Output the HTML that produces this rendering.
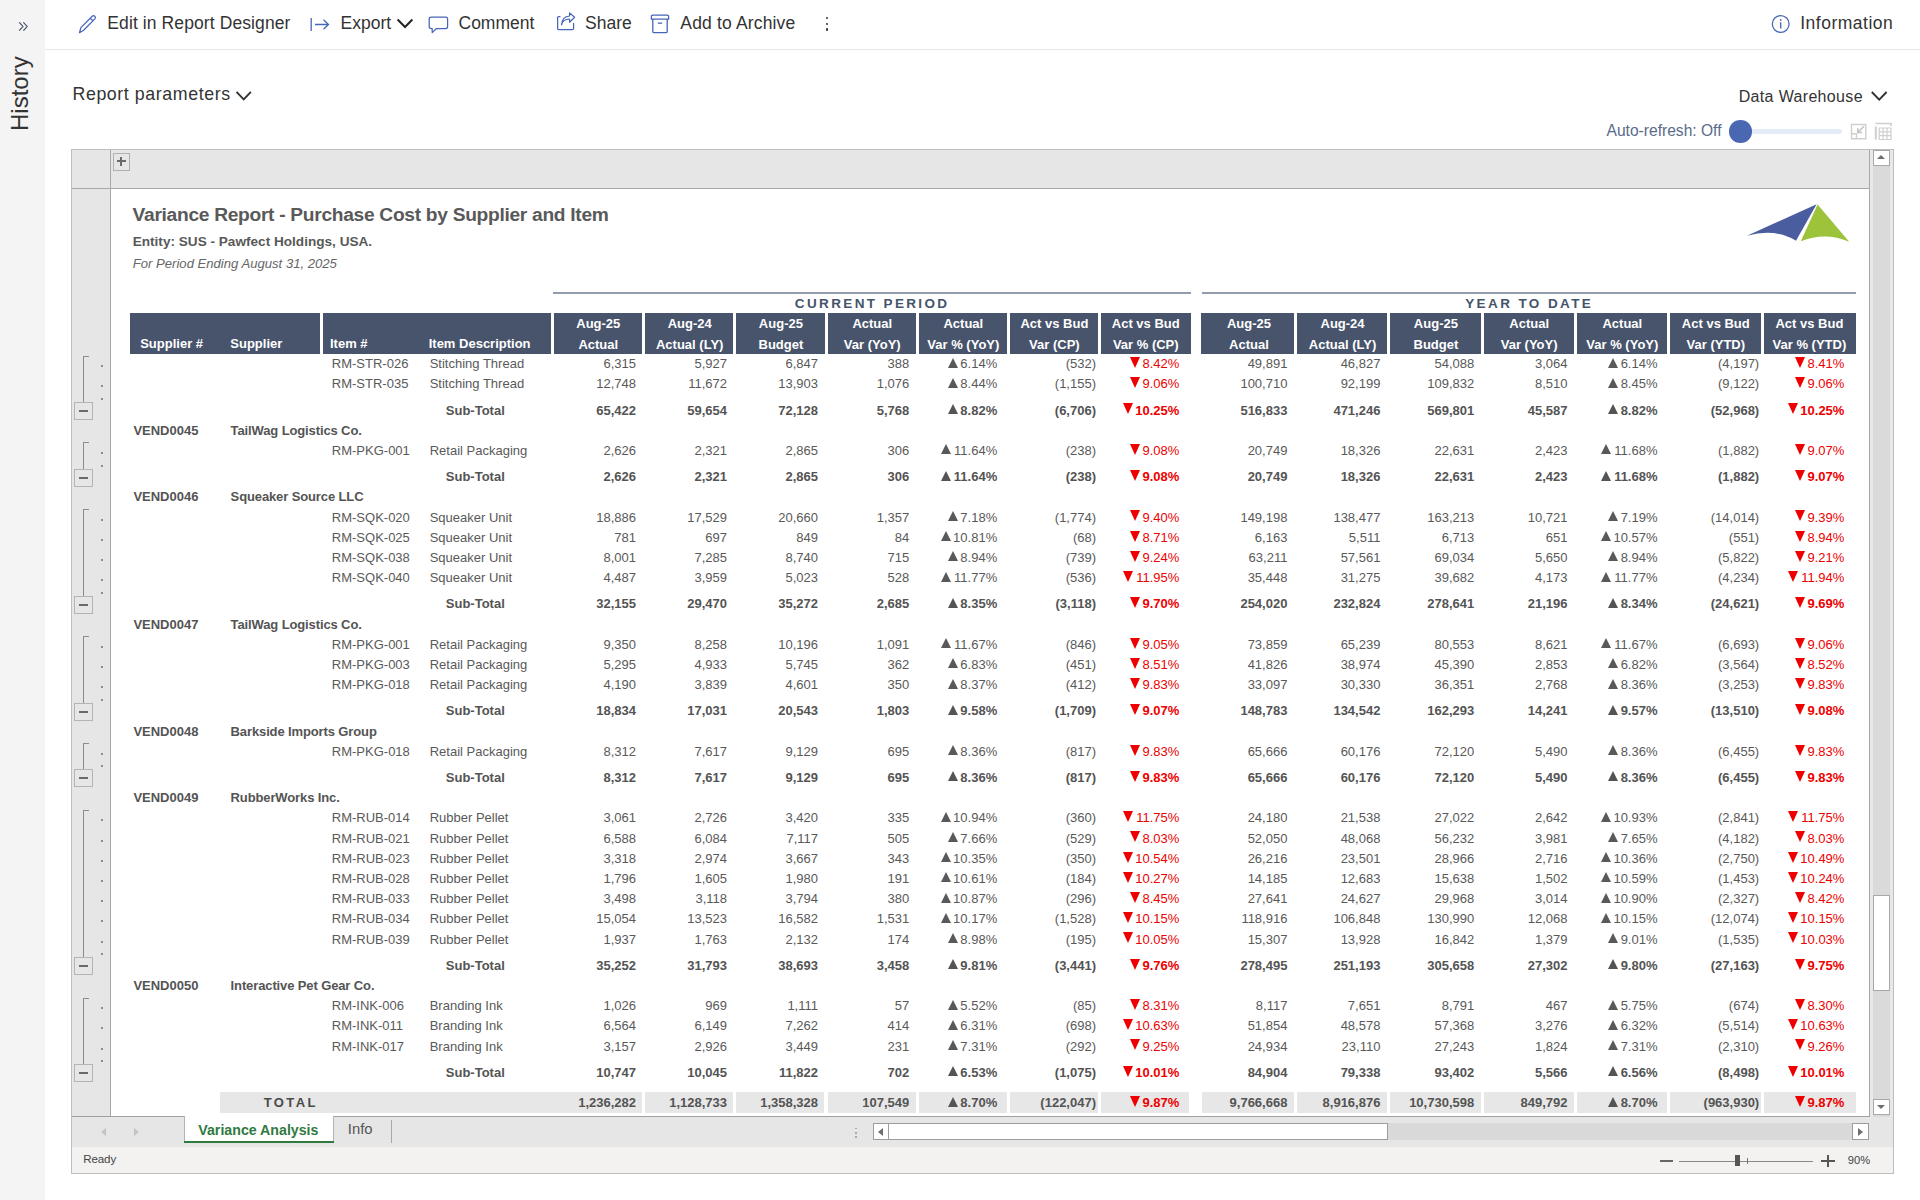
<!DOCTYPE html>
<html><head><meta charset="utf-8">
<style>
html,body{margin:0;padding:0;}
body{width:1920px;height:1200px;overflow:hidden;position:relative;background:#fff;font-family:"Liberation Sans",sans-serif;}
.t{position:absolute;white-space:nowrap;}
svg{position:absolute;overflow:visible;}
</style></head><body>
<!-- sidebar -->
<div style="position:absolute;left:0;top:0;width:45px;height:1200px;background:#f4f4f4"></div>
<svg style="left:18px;top:21px" width="11" height="11" viewBox="0 0 11 11"><path d="M1.2 1.3 L5 5.5 L1.2 9.7 M5.4 1.3 L9.2 5.5 L5.4 9.7" fill="none" stroke="#3d4a66" stroke-width="1.1"/></svg>
<div class="t" style="left:-16.7px;top:80.2px;width:74px;height:28px;font-size:24px;line-height:28px;color:#333;transform:rotate(-90deg);transform-origin:center center;text-align:center">History</div>
<!-- toolbar -->
<div style="position:absolute;left:45px;top:49px;width:1875px;height:1px;background:#e8e8e8"></div>
<svg style="left:78px;top:14px" width="20" height="20" viewBox="0 0 20 20"><path d="M1.5 18.7 L2.9 13.6 L14.2 2.3 Q15.4 1.1 16.8 2.2 Q18.1 3.6 16.9 4.9 L5.6 16.2 Z M12.4 4.2 L15 6.9" fill="none" stroke="#4766b8" stroke-width="1.25" stroke-linejoin="round"/></svg>
<div class="t" style="left:107.3px;top:13.2px;font-size:17.5px;line-height:20px;color:#333;letter-spacing:0.1px">Edit in Report Designer</div>
<svg style="left:309px;top:17px" width="22" height="15" viewBox="0 0 22 15"><path d="M2.2 1 L2.2 14 M6 7.5 L19.5 7.5 M14.5 2.8 L19.5 7.5 L14.5 12.2" fill="none" stroke="#4766b8" stroke-width="1.3"/></svg>
<div class="t" style="left:340.5px;top:13.2px;font-size:17.5px;line-height:20px;color:#333">Export</div>
<svg style="left:396px;top:18px" width="18" height="11" viewBox="0 0 18 11"><path d="M1.6 1.5 L9 9 L16.4 1.5" fill="none" stroke="#222" stroke-width="2"/></svg>
<svg style="left:428px;top:16px" width="21" height="18" viewBox="0 0 21 18"><path d="M3.3 1 L17.5 1 Q19.6 1 19.6 3.1 L19.6 10.6 Q19.6 12.7 17.5 12.7 L8.2 12.7 L4.2 16.6 L4.2 12.7 L3.3 12.7 Q1.2 12.7 1.2 10.6 L1.2 3.1 Q1.2 1 3.3 1 Z" fill="none" stroke="#4766b8" stroke-width="1.25" stroke-linejoin="round"/></svg>
<div class="t" style="left:458.5px;top:13.2px;font-size:17.5px;line-height:20px;color:#333">Comment</div>
<svg style="left:556px;top:12px" width="21" height="20" viewBox="0 0 21 20"><path d="M4.5 4.6 L2.6 4.6 Q1.6 4.6 1.6 5.6 L1.6 16.6 Q1.6 17.6 2.6 17.6 L16.6 17.6 Q17.6 17.6 17.6 16.6 L17.6 11" fill="none" stroke="#4766b8" stroke-width="1.25"/><path d="M5.6 12.8 Q6.6 7.2 13.6 7 L13.6 10.2 L18.6 5.3 L13.6 0.9 L13.6 4 Q6.1 4.5 5.6 12.8 Z" fill="none" stroke="#4766b8" stroke-width="1.2" stroke-linejoin="round"/></svg>
<div class="t" style="left:585px;top:13.2px;font-size:17.5px;line-height:20px;color:#333">Share</div>
<svg style="left:650px;top:14px" width="20" height="20" viewBox="0 0 20 20"><path d="M2.6 1.2 L17.4 1.2 Q18.6 1.2 18.6 2.4 L18.6 5.2 L1.4 5.2 L1.4 2.4 Q1.4 1.2 2.6 1.2 Z M2.8 5.2 L2.8 17.4 Q2.8 18.7 4.1 18.7 L15.9 18.7 Q17.2 18.7 17.2 17.4 L17.2 5.2 M7.8 9.2 L12.2 9.2" fill="none" stroke="#4766b8" stroke-width="1.3" stroke-linejoin="round"/></svg>
<div class="t" style="left:680.3px;top:13.2px;font-size:17.5px;line-height:20px;color:#333;letter-spacing:0.16px">Add to Archive</div>
<div style="position:absolute;left:825.8px;top:17px;width:2.4px;height:2.4px;border-radius:50%;background:#333"></div>
<div style="position:absolute;left:825.8px;top:22.6px;width:2.4px;height:2.4px;border-radius:50%;background:#333"></div>
<div style="position:absolute;left:825.8px;top:28.2px;width:2.4px;height:2.4px;border-radius:50%;background:#333"></div>
<svg style="left:1770px;top:14px" width="20" height="20" viewBox="0 0 20 20"><circle cx="10.7" cy="10" r="8.4" fill="none" stroke="#4766b8" stroke-width="1.25"/><path d="M10.7 8.2 L10.7 14.4" stroke="#4766b8" stroke-width="1.3"/><circle cx="10.7" cy="5.9" r="0.9" fill="#4766b8"/></svg>
<div class="t" style="left:1800.2px;top:13.2px;font-size:17.5px;line-height:20px;color:#333;letter-spacing:0.5px">Information</div>
<!-- params -->
<div class="t" style="left:72.5px;top:83.3px;font-size:17.8px;line-height:22px;color:#333;letter-spacing:0.58px">Report parameters</div>
<svg style="left:235px;top:90px" width="18" height="12" viewBox="0 0 18 12"><path d="M1.5 1.8 L8.7 9.4 L15.9 1.8" fill="none" stroke="#333" stroke-width="1.9"/></svg>
<div class="t" style="left:1738.7px;top:87px;font-size:16px;line-height:20px;color:#333;letter-spacing:0.34px">Data Warehouse</div>
<svg style="left:1870px;top:90px" width="18" height="12" viewBox="0 0 18 12"><path d="M1.8 2 L9.2 9.6 L16.6 2" fill="none" stroke="#333" stroke-width="1.9"/></svg>
<div class="t" style="left:1606.5px;top:121.2px;font-size:15.6px;line-height:20px;color:#5b6b8a">Auto-refresh: Off</div>
<div style="position:absolute;left:1745px;top:129px;width:97px;height:5px;border-radius:3px;background:#e3ebf6"></div>
<div style="position:absolute;left:1729.2px;top:120.2px;width:22.6px;height:22.6px;border-radius:50%;background:#4a67b2"></div>
<svg style="left:1850px;top:123px" width="18" height="18" viewBox="0 0 18 18"><path d="M1.5 1.5 L15.8 1.5 L15.8 15.8 L1.5 15.8 Z" fill="none" stroke="#d0d0d0" stroke-width="1.4"/><path d="M1.5 10.8 L6.5 10.8 L6.5 15.8" fill="none" stroke="#d0d0d0" stroke-width="1.4"/><path d="M14 3.3 L7.8 9.5 M7.8 5.2 L7.8 9.5 L12.1 9.5" fill="none" stroke="#c4c4c4" stroke-width="1.6"/></svg>
<svg style="left:1874px;top:122px" width="19" height="19" viewBox="0 0 19 19"><path d="M1.5 1.5 L17 1.5 L17 4" fill="none" stroke="#cfcfcf" stroke-width="1.6"/><path d="M1.8 4.5 L1.8 17.5" stroke="#cfcfcf" stroke-width="2"/><path d="M5.2 6 L17 6 L17 17.5 L5.2 17.5 Z M5.2 9.8 L17 9.8 M5.2 13.7 L17 13.7 M9.1 6 L9.1 17.5 M13 6 L13 17.5" fill="none" stroke="#cfcfcf" stroke-width="1.2"/></svg>
<!-- spreadsheet frame -->
<div style="position:absolute;left:71px;top:149px;width:1821px;height:1023px;border:1px solid #bdbdbd;background:#fff"></div>
<div style="position:absolute;left:72px;top:150px;width:1797px;height:38px;background:#e6e6e6"></div>
<div style="position:absolute;left:72px;top:188px;width:1797px;height:1px;background:#a8a8a8"></div>
<div style="position:absolute;left:72px;top:189px;width:38px;height:927px;background:#e6e6e6"></div>
<div style="position:absolute;left:110px;top:150px;width:1px;height:966px;background:#a8a8a8"></div>
<div style="position:absolute;left:1869px;top:150px;width:1px;height:967px;background:#a8a8a8"></div>
<div style="position:absolute;left:72px;top:1116px;width:1798px;height:1px;background:#a0a0a0"></div>
<!-- + box -->
<div style="position:absolute;left:112.5px;top:152.5px;width:15px;height:16px;border:1px solid #b0b0b0;background:#e6e6e6"></div>
<div style="position:absolute;left:116.5px;top:160.3px;width:9px;height:2px;background:#6a6a6a"></div>
<div style="position:absolute;left:120px;top:156.8px;width:2px;height:9px;background:#6a6a6a"></div>
<!-- vertical scrollbar -->
<div style="position:absolute;left:1870px;top:150px;width:23px;height:967px;background:#e8e8e8"></div>
<div style="position:absolute;left:1873.3px;top:150px;width:16.5px;height:967px;background:#dadada"></div>
<div style="position:absolute;left:1873.3px;top:150.3px;width:14.5px;height:14.2px;border:1px solid #a8a8a8;background:#fff"></div>
<div style="position:absolute;left:1877.2px;top:155.2px;width:0;height:0;border-left:4.2px solid transparent;border-right:4.2px solid transparent;border-bottom:4.5px solid #6e6e6e"></div>
<div style="position:absolute;left:1873.3px;top:1099px;width:14.5px;height:14.4px;border:1px solid #a8a8a8;background:#fff"></div>
<div style="position:absolute;left:1877.2px;top:1104.8px;width:0;height:0;border-left:4.2px solid transparent;border-right:4.2px solid transparent;border-top:4.5px solid #6e6e6e"></div>
<div style="position:absolute;left:1873.3px;top:895.2px;width:14.6px;height:94.3px;border:1px solid #a8a8a8;background:#fff"></div>
<!-- title block -->
<div class="t" style="left:132.6px;top:203.8px;font-size:19.2px;line-height:22px;font-weight:bold;color:#595959;letter-spacing:-0.3px">Variance Report - Purchase Cost by Supplier and Item</div>
<div class="t" style="left:132.7px;top:233.6px;font-size:13.6px;line-height:16px;font-weight:bold;color:#595959">Entity: SUS - Pawfect Holdings, USA.</div>
<div class="t" style="left:132.8px;top:255.5px;font-size:13.1px;line-height:15px;font-style:italic;color:#666">For Period Ending August 31, 2025</div>
<!-- logo -->
<svg style="left:1740px;top:200px" width="120" height="50" viewBox="1740 200 120 50"><path d="M1747 235.8 L1816.6 204.2 L1796 240.8 Q1775 228 1747 235.8 Z" fill="#4a5d9e"/><path d="M1817.6 204.6 L1849.2 241.7 Q1825 231.5 1800.8 241.3 Z" fill="#9dc33b"/></svg>
<!-- header rules and labels -->
<div style="position:absolute;left:553px;top:292px;width:638px;height:2px;background:#939cad"></div>
<div style="position:absolute;left:1202.3px;top:292px;width:653.5px;height:2px;background:#939cad"></div>
<div class="t" style="left:794.8px;top:296.3px;font-size:13.5px;line-height:15px;font-weight:bold;color:#44546a;letter-spacing:2.37px">CURRENT PERIOD</div>
<div class="t" style="left:1465.2px;top:296.3px;font-size:13.5px;line-height:15px;font-weight:bold;color:#44546a;letter-spacing:2.4px">YEAR TO DATE</div>
<!-- header band -->
<div style="position:absolute;left:130px;top:312.8px;width:1061px;height:41.2px;background:#48546c"></div>
<div style="position:absolute;left:1201.3px;top:312.8px;width:654.5px;height:41.2px;background:#48546c"></div>
<div style="position:absolute;left:320.1px;top:312.8px;width:3px;height:41.2px;background:#fff"></div>
<div style="position:absolute;left:550.5px;top:312.8px;width:3px;height:41.2px;background:#fff"></div>
<div style="position:absolute;left:642.1px;top:312.8px;width:3px;height:41.2px;background:#fff"></div>
<div style="position:absolute;left:733.3px;top:312.8px;width:3px;height:41.2px;background:#fff"></div>
<div style="position:absolute;left:824.5px;top:312.8px;width:3px;height:41.2px;background:#fff"></div>
<div style="position:absolute;left:916.0px;top:312.8px;width:3px;height:41.2px;background:#fff"></div>
<div style="position:absolute;left:1006.7px;top:312.8px;width:3px;height:41.2px;background:#fff"></div>
<div style="position:absolute;left:1098.1px;top:312.8px;width:3px;height:41.2px;background:#fff"></div>
<div style="position:absolute;left:1293.9px;top:312.8px;width:3px;height:41.2px;background:#fff"></div>
<div style="position:absolute;left:1387.2px;top:312.8px;width:3px;height:41.2px;background:#fff"></div>
<div style="position:absolute;left:1480.6px;top:312.8px;width:3px;height:41.2px;background:#fff"></div>
<div style="position:absolute;left:1573.7px;top:312.8px;width:3px;height:41.2px;background:#fff"></div>
<div style="position:absolute;left:1667.0px;top:312.8px;width:3px;height:41.2px;background:#fff"></div>
<div style="position:absolute;left:1760.6px;top:312.8px;width:3px;height:41.2px;background:#fff"></div>

<div class="t" style="left:140.20px;top:336.80px;font-size:13px;line-height:13px;font-weight:bold;color:#fff;">Supplier #</div>
<div class="t" style="left:230.30px;top:336.80px;font-size:13px;line-height:13px;font-weight:bold;color:#fff;">Supplier</div>
<div class="t" style="left:330.00px;top:336.80px;font-size:13px;line-height:13px;font-weight:bold;color:#fff;">Item #</div>
<div class="t" style="left:428.70px;top:336.80px;font-size:13px;line-height:13px;font-weight:bold;color:#fff;">Item Description</div>
<div class="t" style="left:298.30px;width:600px;text-align:center;top:317.40px;font-size:13px;line-height:13px;font-weight:bold;color:#fff;">Aug-25</div>
<div class="t" style="left:298.30px;width:600px;text-align:center;top:337.50px;font-size:13px;line-height:13px;font-weight:bold;color:#fff;">Actual</div>
<div class="t" style="left:389.70px;width:600px;text-align:center;top:317.40px;font-size:13px;line-height:13px;font-weight:bold;color:#fff;">Aug-24</div>
<div class="t" style="left:389.70px;width:600px;text-align:center;top:337.50px;font-size:13px;line-height:13px;font-weight:bold;color:#fff;">Actual (LY)</div>
<div class="t" style="left:480.90px;width:600px;text-align:center;top:317.40px;font-size:13px;line-height:13px;font-weight:bold;color:#fff;">Aug-25</div>
<div class="t" style="left:480.90px;width:600px;text-align:center;top:337.50px;font-size:13px;line-height:13px;font-weight:bold;color:#fff;">Budget</div>
<div class="t" style="left:572.25px;width:600px;text-align:center;top:317.40px;font-size:13px;line-height:13px;font-weight:bold;color:#fff;">Actual</div>
<div class="t" style="left:572.25px;width:600px;text-align:center;top:337.50px;font-size:13px;line-height:13px;font-weight:bold;color:#fff;">Var (YoY)</div>
<div class="t" style="left:663.35px;width:600px;text-align:center;top:317.40px;font-size:13px;line-height:13px;font-weight:bold;color:#fff;">Actual</div>
<div class="t" style="left:663.35px;width:600px;text-align:center;top:337.50px;font-size:13px;line-height:13px;font-weight:bold;color:#fff;">Var % (YoY)</div>
<div class="t" style="left:754.40px;width:600px;text-align:center;top:317.40px;font-size:13px;line-height:13px;font-weight:bold;color:#fff;">Act vs Bud</div>
<div class="t" style="left:754.40px;width:600px;text-align:center;top:337.50px;font-size:13px;line-height:13px;font-weight:bold;color:#fff;">Var (CP)</div>
<div class="t" style="left:845.75px;width:600px;text-align:center;top:317.40px;font-size:13px;line-height:13px;font-weight:bold;color:#fff;">Act vs Bud</div>
<div class="t" style="left:845.75px;width:600px;text-align:center;top:337.50px;font-size:13px;line-height:13px;font-weight:bold;color:#fff;">Var % (CP)</div>
<div class="t" style="left:948.95px;width:600px;text-align:center;top:317.40px;font-size:13px;line-height:13px;font-weight:bold;color:#fff;">Aug-25</div>
<div class="t" style="left:948.95px;width:600px;text-align:center;top:337.50px;font-size:13px;line-height:13px;font-weight:bold;color:#fff;">Actual</div>
<div class="t" style="left:1042.55px;width:600px;text-align:center;top:317.40px;font-size:13px;line-height:13px;font-weight:bold;color:#fff;">Aug-24</div>
<div class="t" style="left:1042.55px;width:600px;text-align:center;top:337.50px;font-size:13px;line-height:13px;font-weight:bold;color:#fff;">Actual (LY)</div>
<div class="t" style="left:1135.90px;width:600px;text-align:center;top:317.40px;font-size:13px;line-height:13px;font-weight:bold;color:#fff;">Aug-25</div>
<div class="t" style="left:1135.90px;width:600px;text-align:center;top:337.50px;font-size:13px;line-height:13px;font-weight:bold;color:#fff;">Budget</div>
<div class="t" style="left:1229.15px;width:600px;text-align:center;top:317.40px;font-size:13px;line-height:13px;font-weight:bold;color:#fff;">Actual</div>
<div class="t" style="left:1229.15px;width:600px;text-align:center;top:337.50px;font-size:13px;line-height:13px;font-weight:bold;color:#fff;">Var (YoY)</div>
<div class="t" style="left:1322.35px;width:600px;text-align:center;top:317.40px;font-size:13px;line-height:13px;font-weight:bold;color:#fff;">Actual</div>
<div class="t" style="left:1322.35px;width:600px;text-align:center;top:337.50px;font-size:13px;line-height:13px;font-weight:bold;color:#fff;">Var % (YoY)</div>
<div class="t" style="left:1415.80px;width:600px;text-align:center;top:317.40px;font-size:13px;line-height:13px;font-weight:bold;color:#fff;">Act vs Bud</div>
<div class="t" style="left:1415.80px;width:600px;text-align:center;top:337.50px;font-size:13px;line-height:13px;font-weight:bold;color:#fff;">Var (YTD)</div>
<div class="t" style="left:1509.45px;width:600px;text-align:center;top:317.40px;font-size:13px;line-height:13px;font-weight:bold;color:#fff;">Act vs Bud</div>
<div class="t" style="left:1509.45px;width:600px;text-align:center;top:337.50px;font-size:13px;line-height:13px;font-weight:bold;color:#fff;">Var % (YTD)</div>
<div class="t" style="left:331.80px;top:357.20px;font-size:13px;line-height:13px;color:#595959;">RM-STR-026</div>
<div class="t" style="left:429.70px;top:357.20px;font-size:13px;line-height:13px;color:#595959;">Stitching Thread</div>
<div class="t" style="right:1284.00px;top:357.20px;font-size:13px;line-height:13px;color:#595959;">6,315</div>
<div class="t" style="right:1193.00px;top:357.20px;font-size:13px;line-height:13px;color:#595959;">5,927</div>
<div class="t" style="right:1102.00px;top:357.20px;font-size:13px;line-height:13px;color:#595959;">6,847</div>
<div class="t" style="right:1010.70px;top:357.20px;font-size:13px;line-height:13px;color:#595959;">388</div>
<div class="t" style="right:922.80px;top:357.20px;font-size:13px;line-height:13px;color:#595959;">6.14%</div>
<div style="position:absolute;left:948.04px;top:357.60px;width:0;height:0;border-left:5.40px solid transparent;border-right:5.40px solid transparent;border-bottom:10.60px solid #595959"></div>
<div class="t" style="right:824.00px;top:357.20px;font-size:13px;line-height:13px;color:#595959;">(532)</div>
<div class="t" style="right:740.70px;top:357.20px;font-size:13px;line-height:13px;color:#ee0000;">8.42%</div>
<div style="position:absolute;left:1129.94px;top:356.90px;width:0;height:0;border-left:5.50px solid transparent;border-right:5.50px solid transparent;border-top:11.00px solid #ee0000"></div>
<div class="t" style="right:632.60px;top:357.20px;font-size:13px;line-height:13px;color:#595959;">49,891</div>
<div class="t" style="right:539.60px;top:357.20px;font-size:13px;line-height:13px;color:#595959;">46,827</div>
<div class="t" style="right:445.80px;top:357.20px;font-size:13px;line-height:13px;color:#595959;">54,088</div>
<div class="t" style="right:352.50px;top:357.20px;font-size:13px;line-height:13px;color:#595959;">3,064</div>
<div class="t" style="right:262.50px;top:357.20px;font-size:13px;line-height:13px;color:#595959;">6.14%</div>
<div style="position:absolute;left:1608.34px;top:357.60px;width:0;height:0;border-left:5.40px solid transparent;border-right:5.40px solid transparent;border-bottom:10.60px solid #595959"></div>
<div class="t" style="right:160.80px;top:357.20px;font-size:13px;line-height:13px;color:#595959;">(4,197)</div>
<div class="t" style="right:75.60px;top:357.20px;font-size:13px;line-height:13px;color:#ee0000;">8.41%</div>
<div style="position:absolute;left:1795.04px;top:356.90px;width:0;height:0;border-left:5.50px solid transparent;border-right:5.50px solid transparent;border-top:11.00px solid #ee0000"></div>
<div class="t" style="left:331.80px;top:377.40px;font-size:13px;line-height:13px;color:#595959;">RM-STR-035</div>
<div class="t" style="left:429.70px;top:377.40px;font-size:13px;line-height:13px;color:#595959;">Stitching Thread</div>
<div class="t" style="right:1284.00px;top:377.40px;font-size:13px;line-height:13px;color:#595959;">12,748</div>
<div class="t" style="right:1193.00px;top:377.40px;font-size:13px;line-height:13px;color:#595959;">11,672</div>
<div class="t" style="right:1102.00px;top:377.40px;font-size:13px;line-height:13px;color:#595959;">13,903</div>
<div class="t" style="right:1010.70px;top:377.40px;font-size:13px;line-height:13px;color:#595959;">1,076</div>
<div class="t" style="right:922.80px;top:377.40px;font-size:13px;line-height:13px;color:#595959;">8.44%</div>
<div style="position:absolute;left:948.04px;top:377.80px;width:0;height:0;border-left:5.40px solid transparent;border-right:5.40px solid transparent;border-bottom:10.60px solid #595959"></div>
<div class="t" style="right:824.00px;top:377.40px;font-size:13px;line-height:13px;color:#595959;">(1,155)</div>
<div class="t" style="right:740.70px;top:377.40px;font-size:13px;line-height:13px;color:#ee0000;">9.06%</div>
<div style="position:absolute;left:1129.94px;top:377.10px;width:0;height:0;border-left:5.50px solid transparent;border-right:5.50px solid transparent;border-top:11.00px solid #ee0000"></div>
<div class="t" style="right:632.60px;top:377.40px;font-size:13px;line-height:13px;color:#595959;">100,710</div>
<div class="t" style="right:539.60px;top:377.40px;font-size:13px;line-height:13px;color:#595959;">92,199</div>
<div class="t" style="right:445.80px;top:377.40px;font-size:13px;line-height:13px;color:#595959;">109,832</div>
<div class="t" style="right:352.50px;top:377.40px;font-size:13px;line-height:13px;color:#595959;">8,510</div>
<div class="t" style="right:262.50px;top:377.40px;font-size:13px;line-height:13px;color:#595959;">8.45%</div>
<div style="position:absolute;left:1608.34px;top:377.80px;width:0;height:0;border-left:5.40px solid transparent;border-right:5.40px solid transparent;border-bottom:10.60px solid #595959"></div>
<div class="t" style="right:160.80px;top:377.40px;font-size:13px;line-height:13px;color:#595959;">(9,122)</div>
<div class="t" style="right:75.60px;top:377.40px;font-size:13px;line-height:13px;color:#ee0000;">9.06%</div>
<div style="position:absolute;left:1795.04px;top:377.10px;width:0;height:0;border-left:5.50px solid transparent;border-right:5.50px solid transparent;border-top:11.00px solid #ee0000"></div>
<div class="t" style="left:445.80px;top:403.60px;font-size:13px;line-height:13px;font-weight:bold;color:#545454;">Sub-Total</div>
<div class="t" style="right:1284.00px;top:403.60px;font-size:13px;line-height:13px;font-weight:bold;color:#545454;">65,422</div>
<div class="t" style="right:1193.00px;top:403.60px;font-size:13px;line-height:13px;font-weight:bold;color:#545454;">59,654</div>
<div class="t" style="right:1102.00px;top:403.60px;font-size:13px;line-height:13px;font-weight:bold;color:#545454;">72,128</div>
<div class="t" style="right:1010.70px;top:403.60px;font-size:13px;line-height:13px;font-weight:bold;color:#545454;">5,768</div>
<div class="t" style="right:922.80px;top:403.60px;font-size:13px;line-height:13px;font-weight:bold;color:#545454;">8.82%</div>
<div style="position:absolute;left:948.04px;top:404.00px;width:0;height:0;border-left:5.40px solid transparent;border-right:5.40px solid transparent;border-bottom:10.60px solid #545454"></div>
<div class="t" style="right:824.00px;top:403.60px;font-size:13px;line-height:13px;font-weight:bold;color:#545454;">(6,706)</div>
<div class="t" style="right:740.70px;top:403.60px;font-size:13px;line-height:13px;font-weight:bold;color:#ee0000;">10.25%</div>
<div style="position:absolute;left:1122.71px;top:403.30px;width:0;height:0;border-left:5.50px solid transparent;border-right:5.50px solid transparent;border-top:11.00px solid #ee0000"></div>
<div class="t" style="right:632.60px;top:403.60px;font-size:13px;line-height:13px;font-weight:bold;color:#545454;">516,833</div>
<div class="t" style="right:539.60px;top:403.60px;font-size:13px;line-height:13px;font-weight:bold;color:#545454;">471,246</div>
<div class="t" style="right:445.80px;top:403.60px;font-size:13px;line-height:13px;font-weight:bold;color:#545454;">569,801</div>
<div class="t" style="right:352.50px;top:403.60px;font-size:13px;line-height:13px;font-weight:bold;color:#545454;">45,587</div>
<div class="t" style="right:262.50px;top:403.60px;font-size:13px;line-height:13px;font-weight:bold;color:#545454;">8.82%</div>
<div style="position:absolute;left:1608.34px;top:404.00px;width:0;height:0;border-left:5.40px solid transparent;border-right:5.40px solid transparent;border-bottom:10.60px solid #545454"></div>
<div class="t" style="right:160.80px;top:403.60px;font-size:13px;line-height:13px;font-weight:bold;color:#545454;">(52,968)</div>
<div class="t" style="right:75.60px;top:403.60px;font-size:13px;line-height:13px;font-weight:bold;color:#ee0000;">10.25%</div>
<div style="position:absolute;left:1787.81px;top:403.30px;width:0;height:0;border-left:5.50px solid transparent;border-right:5.50px solid transparent;border-top:11.00px solid #ee0000"></div>
<div class="t" style="left:133.40px;top:423.80px;font-size:13px;line-height:13px;font-weight:bold;color:#545454;">VEND0045</div>
<div class="t" style="left:230.60px;top:423.80px;font-size:13px;line-height:13px;font-weight:bold;color:#545454;letter-spacing:-0.12px;">TailWag Logistics Co.</div>
<div class="t" style="left:331.80px;top:444.00px;font-size:13px;line-height:13px;color:#595959;">RM-PKG-001</div>
<div class="t" style="left:429.70px;top:444.00px;font-size:13px;line-height:13px;color:#595959;">Retail Packaging</div>
<div class="t" style="right:1284.00px;top:444.00px;font-size:13px;line-height:13px;color:#595959;">2,626</div>
<div class="t" style="right:1193.00px;top:444.00px;font-size:13px;line-height:13px;color:#595959;">2,321</div>
<div class="t" style="right:1102.00px;top:444.00px;font-size:13px;line-height:13px;color:#595959;">2,865</div>
<div class="t" style="right:1010.70px;top:444.00px;font-size:13px;line-height:13px;color:#595959;">306</div>
<div class="t" style="right:922.80px;top:444.00px;font-size:13px;line-height:13px;color:#595959;">11.64%</div>
<div style="position:absolute;left:940.81px;top:444.40px;width:0;height:0;border-left:5.40px solid transparent;border-right:5.40px solid transparent;border-bottom:10.60px solid #595959"></div>
<div class="t" style="right:824.00px;top:444.00px;font-size:13px;line-height:13px;color:#595959;">(238)</div>
<div class="t" style="right:740.70px;top:444.00px;font-size:13px;line-height:13px;color:#ee0000;">9.08%</div>
<div style="position:absolute;left:1129.94px;top:443.70px;width:0;height:0;border-left:5.50px solid transparent;border-right:5.50px solid transparent;border-top:11.00px solid #ee0000"></div>
<div class="t" style="right:632.60px;top:444.00px;font-size:13px;line-height:13px;color:#595959;">20,749</div>
<div class="t" style="right:539.60px;top:444.00px;font-size:13px;line-height:13px;color:#595959;">18,326</div>
<div class="t" style="right:445.80px;top:444.00px;font-size:13px;line-height:13px;color:#595959;">22,631</div>
<div class="t" style="right:352.50px;top:444.00px;font-size:13px;line-height:13px;color:#595959;">2,423</div>
<div class="t" style="right:262.50px;top:444.00px;font-size:13px;line-height:13px;color:#595959;">11.68%</div>
<div style="position:absolute;left:1601.11px;top:444.40px;width:0;height:0;border-left:5.40px solid transparent;border-right:5.40px solid transparent;border-bottom:10.60px solid #595959"></div>
<div class="t" style="right:160.80px;top:444.00px;font-size:13px;line-height:13px;color:#595959;">(1,882)</div>
<div class="t" style="right:75.60px;top:444.00px;font-size:13px;line-height:13px;color:#ee0000;">9.07%</div>
<div style="position:absolute;left:1795.04px;top:443.70px;width:0;height:0;border-left:5.50px solid transparent;border-right:5.50px solid transparent;border-top:11.00px solid #ee0000"></div>
<div class="t" style="left:445.80px;top:470.20px;font-size:13px;line-height:13px;font-weight:bold;color:#545454;">Sub-Total</div>
<div class="t" style="right:1284.00px;top:470.20px;font-size:13px;line-height:13px;font-weight:bold;color:#545454;">2,626</div>
<div class="t" style="right:1193.00px;top:470.20px;font-size:13px;line-height:13px;font-weight:bold;color:#545454;">2,321</div>
<div class="t" style="right:1102.00px;top:470.20px;font-size:13px;line-height:13px;font-weight:bold;color:#545454;">2,865</div>
<div class="t" style="right:1010.70px;top:470.20px;font-size:13px;line-height:13px;font-weight:bold;color:#545454;">306</div>
<div class="t" style="right:922.80px;top:470.20px;font-size:13px;line-height:13px;font-weight:bold;color:#545454;">11.64%</div>
<div style="position:absolute;left:940.81px;top:470.60px;width:0;height:0;border-left:5.40px solid transparent;border-right:5.40px solid transparent;border-bottom:10.60px solid #545454"></div>
<div class="t" style="right:824.00px;top:470.20px;font-size:13px;line-height:13px;font-weight:bold;color:#545454;">(238)</div>
<div class="t" style="right:740.70px;top:470.20px;font-size:13px;line-height:13px;font-weight:bold;color:#ee0000;">9.08%</div>
<div style="position:absolute;left:1129.94px;top:469.90px;width:0;height:0;border-left:5.50px solid transparent;border-right:5.50px solid transparent;border-top:11.00px solid #ee0000"></div>
<div class="t" style="right:632.60px;top:470.20px;font-size:13px;line-height:13px;font-weight:bold;color:#545454;">20,749</div>
<div class="t" style="right:539.60px;top:470.20px;font-size:13px;line-height:13px;font-weight:bold;color:#545454;">18,326</div>
<div class="t" style="right:445.80px;top:470.20px;font-size:13px;line-height:13px;font-weight:bold;color:#545454;">22,631</div>
<div class="t" style="right:352.50px;top:470.20px;font-size:13px;line-height:13px;font-weight:bold;color:#545454;">2,423</div>
<div class="t" style="right:262.50px;top:470.20px;font-size:13px;line-height:13px;font-weight:bold;color:#545454;">11.68%</div>
<div style="position:absolute;left:1601.11px;top:470.60px;width:0;height:0;border-left:5.40px solid transparent;border-right:5.40px solid transparent;border-bottom:10.60px solid #545454"></div>
<div class="t" style="right:160.80px;top:470.20px;font-size:13px;line-height:13px;font-weight:bold;color:#545454;">(1,882)</div>
<div class="t" style="right:75.60px;top:470.20px;font-size:13px;line-height:13px;font-weight:bold;color:#ee0000;">9.07%</div>
<div style="position:absolute;left:1795.04px;top:469.90px;width:0;height:0;border-left:5.50px solid transparent;border-right:5.50px solid transparent;border-top:11.00px solid #ee0000"></div>
<div class="t" style="left:133.40px;top:490.40px;font-size:13px;line-height:13px;font-weight:bold;color:#545454;">VEND0046</div>
<div class="t" style="left:230.60px;top:490.40px;font-size:13px;line-height:13px;font-weight:bold;color:#545454;letter-spacing:-0.12px;">Squeaker Source LLC</div>
<div class="t" style="left:331.80px;top:510.60px;font-size:13px;line-height:13px;color:#595959;">RM-SQK-020</div>
<div class="t" style="left:429.70px;top:510.60px;font-size:13px;line-height:13px;color:#595959;">Squeaker Unit</div>
<div class="t" style="right:1284.00px;top:510.60px;font-size:13px;line-height:13px;color:#595959;">18,886</div>
<div class="t" style="right:1193.00px;top:510.60px;font-size:13px;line-height:13px;color:#595959;">17,529</div>
<div class="t" style="right:1102.00px;top:510.60px;font-size:13px;line-height:13px;color:#595959;">20,660</div>
<div class="t" style="right:1010.70px;top:510.60px;font-size:13px;line-height:13px;color:#595959;">1,357</div>
<div class="t" style="right:922.80px;top:510.60px;font-size:13px;line-height:13px;color:#595959;">7.18%</div>
<div style="position:absolute;left:948.04px;top:511.00px;width:0;height:0;border-left:5.40px solid transparent;border-right:5.40px solid transparent;border-bottom:10.60px solid #595959"></div>
<div class="t" style="right:824.00px;top:510.60px;font-size:13px;line-height:13px;color:#595959;">(1,774)</div>
<div class="t" style="right:740.70px;top:510.60px;font-size:13px;line-height:13px;color:#ee0000;">9.40%</div>
<div style="position:absolute;left:1129.94px;top:510.30px;width:0;height:0;border-left:5.50px solid transparent;border-right:5.50px solid transparent;border-top:11.00px solid #ee0000"></div>
<div class="t" style="right:632.60px;top:510.60px;font-size:13px;line-height:13px;color:#595959;">149,198</div>
<div class="t" style="right:539.60px;top:510.60px;font-size:13px;line-height:13px;color:#595959;">138,477</div>
<div class="t" style="right:445.80px;top:510.60px;font-size:13px;line-height:13px;color:#595959;">163,213</div>
<div class="t" style="right:352.50px;top:510.60px;font-size:13px;line-height:13px;color:#595959;">10,721</div>
<div class="t" style="right:262.50px;top:510.60px;font-size:13px;line-height:13px;color:#595959;">7.19%</div>
<div style="position:absolute;left:1608.34px;top:511.00px;width:0;height:0;border-left:5.40px solid transparent;border-right:5.40px solid transparent;border-bottom:10.60px solid #595959"></div>
<div class="t" style="right:160.80px;top:510.60px;font-size:13px;line-height:13px;color:#595959;">(14,014)</div>
<div class="t" style="right:75.60px;top:510.60px;font-size:13px;line-height:13px;color:#ee0000;">9.39%</div>
<div style="position:absolute;left:1795.04px;top:510.30px;width:0;height:0;border-left:5.50px solid transparent;border-right:5.50px solid transparent;border-top:11.00px solid #ee0000"></div>
<div class="t" style="left:331.80px;top:530.80px;font-size:13px;line-height:13px;color:#595959;">RM-SQK-025</div>
<div class="t" style="left:429.70px;top:530.80px;font-size:13px;line-height:13px;color:#595959;">Squeaker Unit</div>
<div class="t" style="right:1284.00px;top:530.80px;font-size:13px;line-height:13px;color:#595959;">781</div>
<div class="t" style="right:1193.00px;top:530.80px;font-size:13px;line-height:13px;color:#595959;">697</div>
<div class="t" style="right:1102.00px;top:530.80px;font-size:13px;line-height:13px;color:#595959;">849</div>
<div class="t" style="right:1010.70px;top:530.80px;font-size:13px;line-height:13px;color:#595959;">84</div>
<div class="t" style="right:922.80px;top:530.80px;font-size:13px;line-height:13px;color:#595959;">10.81%</div>
<div style="position:absolute;left:940.81px;top:531.20px;width:0;height:0;border-left:5.40px solid transparent;border-right:5.40px solid transparent;border-bottom:10.60px solid #595959"></div>
<div class="t" style="right:824.00px;top:530.80px;font-size:13px;line-height:13px;color:#595959;">(68)</div>
<div class="t" style="right:740.70px;top:530.80px;font-size:13px;line-height:13px;color:#ee0000;">8.71%</div>
<div style="position:absolute;left:1129.94px;top:530.50px;width:0;height:0;border-left:5.50px solid transparent;border-right:5.50px solid transparent;border-top:11.00px solid #ee0000"></div>
<div class="t" style="right:632.60px;top:530.80px;font-size:13px;line-height:13px;color:#595959;">6,163</div>
<div class="t" style="right:539.60px;top:530.80px;font-size:13px;line-height:13px;color:#595959;">5,511</div>
<div class="t" style="right:445.80px;top:530.80px;font-size:13px;line-height:13px;color:#595959;">6,713</div>
<div class="t" style="right:352.50px;top:530.80px;font-size:13px;line-height:13px;color:#595959;">651</div>
<div class="t" style="right:262.50px;top:530.80px;font-size:13px;line-height:13px;color:#595959;">10.57%</div>
<div style="position:absolute;left:1601.11px;top:531.20px;width:0;height:0;border-left:5.40px solid transparent;border-right:5.40px solid transparent;border-bottom:10.60px solid #595959"></div>
<div class="t" style="right:160.80px;top:530.80px;font-size:13px;line-height:13px;color:#595959;">(551)</div>
<div class="t" style="right:75.60px;top:530.80px;font-size:13px;line-height:13px;color:#ee0000;">8.94%</div>
<div style="position:absolute;left:1795.04px;top:530.50px;width:0;height:0;border-left:5.50px solid transparent;border-right:5.50px solid transparent;border-top:11.00px solid #ee0000"></div>
<div class="t" style="left:331.80px;top:551.00px;font-size:13px;line-height:13px;color:#595959;">RM-SQK-038</div>
<div class="t" style="left:429.70px;top:551.00px;font-size:13px;line-height:13px;color:#595959;">Squeaker Unit</div>
<div class="t" style="right:1284.00px;top:551.00px;font-size:13px;line-height:13px;color:#595959;">8,001</div>
<div class="t" style="right:1193.00px;top:551.00px;font-size:13px;line-height:13px;color:#595959;">7,285</div>
<div class="t" style="right:1102.00px;top:551.00px;font-size:13px;line-height:13px;color:#595959;">8,740</div>
<div class="t" style="right:1010.70px;top:551.00px;font-size:13px;line-height:13px;color:#595959;">715</div>
<div class="t" style="right:922.80px;top:551.00px;font-size:13px;line-height:13px;color:#595959;">8.94%</div>
<div style="position:absolute;left:948.04px;top:551.40px;width:0;height:0;border-left:5.40px solid transparent;border-right:5.40px solid transparent;border-bottom:10.60px solid #595959"></div>
<div class="t" style="right:824.00px;top:551.00px;font-size:13px;line-height:13px;color:#595959;">(739)</div>
<div class="t" style="right:740.70px;top:551.00px;font-size:13px;line-height:13px;color:#ee0000;">9.24%</div>
<div style="position:absolute;left:1129.94px;top:550.70px;width:0;height:0;border-left:5.50px solid transparent;border-right:5.50px solid transparent;border-top:11.00px solid #ee0000"></div>
<div class="t" style="right:632.60px;top:551.00px;font-size:13px;line-height:13px;color:#595959;">63,211</div>
<div class="t" style="right:539.60px;top:551.00px;font-size:13px;line-height:13px;color:#595959;">57,561</div>
<div class="t" style="right:445.80px;top:551.00px;font-size:13px;line-height:13px;color:#595959;">69,034</div>
<div class="t" style="right:352.50px;top:551.00px;font-size:13px;line-height:13px;color:#595959;">5,650</div>
<div class="t" style="right:262.50px;top:551.00px;font-size:13px;line-height:13px;color:#595959;">8.94%</div>
<div style="position:absolute;left:1608.34px;top:551.40px;width:0;height:0;border-left:5.40px solid transparent;border-right:5.40px solid transparent;border-bottom:10.60px solid #595959"></div>
<div class="t" style="right:160.80px;top:551.00px;font-size:13px;line-height:13px;color:#595959;">(5,822)</div>
<div class="t" style="right:75.60px;top:551.00px;font-size:13px;line-height:13px;color:#ee0000;">9.21%</div>
<div style="position:absolute;left:1795.04px;top:550.70px;width:0;height:0;border-left:5.50px solid transparent;border-right:5.50px solid transparent;border-top:11.00px solid #ee0000"></div>
<div class="t" style="left:331.80px;top:571.20px;font-size:13px;line-height:13px;color:#595959;">RM-SQK-040</div>
<div class="t" style="left:429.70px;top:571.20px;font-size:13px;line-height:13px;color:#595959;">Squeaker Unit</div>
<div class="t" style="right:1284.00px;top:571.20px;font-size:13px;line-height:13px;color:#595959;">4,487</div>
<div class="t" style="right:1193.00px;top:571.20px;font-size:13px;line-height:13px;color:#595959;">3,959</div>
<div class="t" style="right:1102.00px;top:571.20px;font-size:13px;line-height:13px;color:#595959;">5,023</div>
<div class="t" style="right:1010.70px;top:571.20px;font-size:13px;line-height:13px;color:#595959;">528</div>
<div class="t" style="right:922.80px;top:571.20px;font-size:13px;line-height:13px;color:#595959;">11.77%</div>
<div style="position:absolute;left:940.81px;top:571.60px;width:0;height:0;border-left:5.40px solid transparent;border-right:5.40px solid transparent;border-bottom:10.60px solid #595959"></div>
<div class="t" style="right:824.00px;top:571.20px;font-size:13px;line-height:13px;color:#595959;">(536)</div>
<div class="t" style="right:740.70px;top:571.20px;font-size:13px;line-height:13px;color:#ee0000;">11.95%</div>
<div style="position:absolute;left:1122.71px;top:570.90px;width:0;height:0;border-left:5.50px solid transparent;border-right:5.50px solid transparent;border-top:11.00px solid #ee0000"></div>
<div class="t" style="right:632.60px;top:571.20px;font-size:13px;line-height:13px;color:#595959;">35,448</div>
<div class="t" style="right:539.60px;top:571.20px;font-size:13px;line-height:13px;color:#595959;">31,275</div>
<div class="t" style="right:445.80px;top:571.20px;font-size:13px;line-height:13px;color:#595959;">39,682</div>
<div class="t" style="right:352.50px;top:571.20px;font-size:13px;line-height:13px;color:#595959;">4,173</div>
<div class="t" style="right:262.50px;top:571.20px;font-size:13px;line-height:13px;color:#595959;">11.77%</div>
<div style="position:absolute;left:1601.11px;top:571.60px;width:0;height:0;border-left:5.40px solid transparent;border-right:5.40px solid transparent;border-bottom:10.60px solid #595959"></div>
<div class="t" style="right:160.80px;top:571.20px;font-size:13px;line-height:13px;color:#595959;">(4,234)</div>
<div class="t" style="right:75.60px;top:571.20px;font-size:13px;line-height:13px;color:#ee0000;">11.94%</div>
<div style="position:absolute;left:1787.81px;top:570.90px;width:0;height:0;border-left:5.50px solid transparent;border-right:5.50px solid transparent;border-top:11.00px solid #ee0000"></div>
<div class="t" style="left:445.80px;top:597.40px;font-size:13px;line-height:13px;font-weight:bold;color:#545454;">Sub-Total</div>
<div class="t" style="right:1284.00px;top:597.40px;font-size:13px;line-height:13px;font-weight:bold;color:#545454;">32,155</div>
<div class="t" style="right:1193.00px;top:597.40px;font-size:13px;line-height:13px;font-weight:bold;color:#545454;">29,470</div>
<div class="t" style="right:1102.00px;top:597.40px;font-size:13px;line-height:13px;font-weight:bold;color:#545454;">35,272</div>
<div class="t" style="right:1010.70px;top:597.40px;font-size:13px;line-height:13px;font-weight:bold;color:#545454;">2,685</div>
<div class="t" style="right:922.80px;top:597.40px;font-size:13px;line-height:13px;font-weight:bold;color:#545454;">8.35%</div>
<div style="position:absolute;left:948.04px;top:597.80px;width:0;height:0;border-left:5.40px solid transparent;border-right:5.40px solid transparent;border-bottom:10.60px solid #545454"></div>
<div class="t" style="right:824.00px;top:597.40px;font-size:13px;line-height:13px;font-weight:bold;color:#545454;">(3,118)</div>
<div class="t" style="right:740.70px;top:597.40px;font-size:13px;line-height:13px;font-weight:bold;color:#ee0000;">9.70%</div>
<div style="position:absolute;left:1129.94px;top:597.10px;width:0;height:0;border-left:5.50px solid transparent;border-right:5.50px solid transparent;border-top:11.00px solid #ee0000"></div>
<div class="t" style="right:632.60px;top:597.40px;font-size:13px;line-height:13px;font-weight:bold;color:#545454;">254,020</div>
<div class="t" style="right:539.60px;top:597.40px;font-size:13px;line-height:13px;font-weight:bold;color:#545454;">232,824</div>
<div class="t" style="right:445.80px;top:597.40px;font-size:13px;line-height:13px;font-weight:bold;color:#545454;">278,641</div>
<div class="t" style="right:352.50px;top:597.40px;font-size:13px;line-height:13px;font-weight:bold;color:#545454;">21,196</div>
<div class="t" style="right:262.50px;top:597.40px;font-size:13px;line-height:13px;font-weight:bold;color:#545454;">8.34%</div>
<div style="position:absolute;left:1608.34px;top:597.80px;width:0;height:0;border-left:5.40px solid transparent;border-right:5.40px solid transparent;border-bottom:10.60px solid #545454"></div>
<div class="t" style="right:160.80px;top:597.40px;font-size:13px;line-height:13px;font-weight:bold;color:#545454;">(24,621)</div>
<div class="t" style="right:75.60px;top:597.40px;font-size:13px;line-height:13px;font-weight:bold;color:#ee0000;">9.69%</div>
<div style="position:absolute;left:1795.04px;top:597.10px;width:0;height:0;border-left:5.50px solid transparent;border-right:5.50px solid transparent;border-top:11.00px solid #ee0000"></div>
<div class="t" style="left:133.40px;top:617.60px;font-size:13px;line-height:13px;font-weight:bold;color:#545454;">VEND0047</div>
<div class="t" style="left:230.60px;top:617.60px;font-size:13px;line-height:13px;font-weight:bold;color:#545454;letter-spacing:-0.12px;">TailWag Logistics Co.</div>
<div class="t" style="left:331.80px;top:637.80px;font-size:13px;line-height:13px;color:#595959;">RM-PKG-001</div>
<div class="t" style="left:429.70px;top:637.80px;font-size:13px;line-height:13px;color:#595959;">Retail Packaging</div>
<div class="t" style="right:1284.00px;top:637.80px;font-size:13px;line-height:13px;color:#595959;">9,350</div>
<div class="t" style="right:1193.00px;top:637.80px;font-size:13px;line-height:13px;color:#595959;">8,258</div>
<div class="t" style="right:1102.00px;top:637.80px;font-size:13px;line-height:13px;color:#595959;">10,196</div>
<div class="t" style="right:1010.70px;top:637.80px;font-size:13px;line-height:13px;color:#595959;">1,091</div>
<div class="t" style="right:922.80px;top:637.80px;font-size:13px;line-height:13px;color:#595959;">11.67%</div>
<div style="position:absolute;left:940.81px;top:638.20px;width:0;height:0;border-left:5.40px solid transparent;border-right:5.40px solid transparent;border-bottom:10.60px solid #595959"></div>
<div class="t" style="right:824.00px;top:637.80px;font-size:13px;line-height:13px;color:#595959;">(846)</div>
<div class="t" style="right:740.70px;top:637.80px;font-size:13px;line-height:13px;color:#ee0000;">9.05%</div>
<div style="position:absolute;left:1129.94px;top:637.50px;width:0;height:0;border-left:5.50px solid transparent;border-right:5.50px solid transparent;border-top:11.00px solid #ee0000"></div>
<div class="t" style="right:632.60px;top:637.80px;font-size:13px;line-height:13px;color:#595959;">73,859</div>
<div class="t" style="right:539.60px;top:637.80px;font-size:13px;line-height:13px;color:#595959;">65,239</div>
<div class="t" style="right:445.80px;top:637.80px;font-size:13px;line-height:13px;color:#595959;">80,553</div>
<div class="t" style="right:352.50px;top:637.80px;font-size:13px;line-height:13px;color:#595959;">8,621</div>
<div class="t" style="right:262.50px;top:637.80px;font-size:13px;line-height:13px;color:#595959;">11.67%</div>
<div style="position:absolute;left:1601.11px;top:638.20px;width:0;height:0;border-left:5.40px solid transparent;border-right:5.40px solid transparent;border-bottom:10.60px solid #595959"></div>
<div class="t" style="right:160.80px;top:637.80px;font-size:13px;line-height:13px;color:#595959;">(6,693)</div>
<div class="t" style="right:75.60px;top:637.80px;font-size:13px;line-height:13px;color:#ee0000;">9.06%</div>
<div style="position:absolute;left:1795.04px;top:637.50px;width:0;height:0;border-left:5.50px solid transparent;border-right:5.50px solid transparent;border-top:11.00px solid #ee0000"></div>
<div class="t" style="left:331.80px;top:658.00px;font-size:13px;line-height:13px;color:#595959;">RM-PKG-003</div>
<div class="t" style="left:429.70px;top:658.00px;font-size:13px;line-height:13px;color:#595959;">Retail Packaging</div>
<div class="t" style="right:1284.00px;top:658.00px;font-size:13px;line-height:13px;color:#595959;">5,295</div>
<div class="t" style="right:1193.00px;top:658.00px;font-size:13px;line-height:13px;color:#595959;">4,933</div>
<div class="t" style="right:1102.00px;top:658.00px;font-size:13px;line-height:13px;color:#595959;">5,745</div>
<div class="t" style="right:1010.70px;top:658.00px;font-size:13px;line-height:13px;color:#595959;">362</div>
<div class="t" style="right:922.80px;top:658.00px;font-size:13px;line-height:13px;color:#595959;">6.83%</div>
<div style="position:absolute;left:948.04px;top:658.40px;width:0;height:0;border-left:5.40px solid transparent;border-right:5.40px solid transparent;border-bottom:10.60px solid #595959"></div>
<div class="t" style="right:824.00px;top:658.00px;font-size:13px;line-height:13px;color:#595959;">(451)</div>
<div class="t" style="right:740.70px;top:658.00px;font-size:13px;line-height:13px;color:#ee0000;">8.51%</div>
<div style="position:absolute;left:1129.94px;top:657.70px;width:0;height:0;border-left:5.50px solid transparent;border-right:5.50px solid transparent;border-top:11.00px solid #ee0000"></div>
<div class="t" style="right:632.60px;top:658.00px;font-size:13px;line-height:13px;color:#595959;">41,826</div>
<div class="t" style="right:539.60px;top:658.00px;font-size:13px;line-height:13px;color:#595959;">38,974</div>
<div class="t" style="right:445.80px;top:658.00px;font-size:13px;line-height:13px;color:#595959;">45,390</div>
<div class="t" style="right:352.50px;top:658.00px;font-size:13px;line-height:13px;color:#595959;">2,853</div>
<div class="t" style="right:262.50px;top:658.00px;font-size:13px;line-height:13px;color:#595959;">6.82%</div>
<div style="position:absolute;left:1608.34px;top:658.40px;width:0;height:0;border-left:5.40px solid transparent;border-right:5.40px solid transparent;border-bottom:10.60px solid #595959"></div>
<div class="t" style="right:160.80px;top:658.00px;font-size:13px;line-height:13px;color:#595959;">(3,564)</div>
<div class="t" style="right:75.60px;top:658.00px;font-size:13px;line-height:13px;color:#ee0000;">8.52%</div>
<div style="position:absolute;left:1795.04px;top:657.70px;width:0;height:0;border-left:5.50px solid transparent;border-right:5.50px solid transparent;border-top:11.00px solid #ee0000"></div>
<div class="t" style="left:331.80px;top:678.20px;font-size:13px;line-height:13px;color:#595959;">RM-PKG-018</div>
<div class="t" style="left:429.70px;top:678.20px;font-size:13px;line-height:13px;color:#595959;">Retail Packaging</div>
<div class="t" style="right:1284.00px;top:678.20px;font-size:13px;line-height:13px;color:#595959;">4,190</div>
<div class="t" style="right:1193.00px;top:678.20px;font-size:13px;line-height:13px;color:#595959;">3,839</div>
<div class="t" style="right:1102.00px;top:678.20px;font-size:13px;line-height:13px;color:#595959;">4,601</div>
<div class="t" style="right:1010.70px;top:678.20px;font-size:13px;line-height:13px;color:#595959;">350</div>
<div class="t" style="right:922.80px;top:678.20px;font-size:13px;line-height:13px;color:#595959;">8.37%</div>
<div style="position:absolute;left:948.04px;top:678.60px;width:0;height:0;border-left:5.40px solid transparent;border-right:5.40px solid transparent;border-bottom:10.60px solid #595959"></div>
<div class="t" style="right:824.00px;top:678.20px;font-size:13px;line-height:13px;color:#595959;">(412)</div>
<div class="t" style="right:740.70px;top:678.20px;font-size:13px;line-height:13px;color:#ee0000;">9.83%</div>
<div style="position:absolute;left:1129.94px;top:677.90px;width:0;height:0;border-left:5.50px solid transparent;border-right:5.50px solid transparent;border-top:11.00px solid #ee0000"></div>
<div class="t" style="right:632.60px;top:678.20px;font-size:13px;line-height:13px;color:#595959;">33,097</div>
<div class="t" style="right:539.60px;top:678.20px;font-size:13px;line-height:13px;color:#595959;">30,330</div>
<div class="t" style="right:445.80px;top:678.20px;font-size:13px;line-height:13px;color:#595959;">36,351</div>
<div class="t" style="right:352.50px;top:678.20px;font-size:13px;line-height:13px;color:#595959;">2,768</div>
<div class="t" style="right:262.50px;top:678.20px;font-size:13px;line-height:13px;color:#595959;">8.36%</div>
<div style="position:absolute;left:1608.34px;top:678.60px;width:0;height:0;border-left:5.40px solid transparent;border-right:5.40px solid transparent;border-bottom:10.60px solid #595959"></div>
<div class="t" style="right:160.80px;top:678.20px;font-size:13px;line-height:13px;color:#595959;">(3,253)</div>
<div class="t" style="right:75.60px;top:678.20px;font-size:13px;line-height:13px;color:#ee0000;">9.83%</div>
<div style="position:absolute;left:1795.04px;top:677.90px;width:0;height:0;border-left:5.50px solid transparent;border-right:5.50px solid transparent;border-top:11.00px solid #ee0000"></div>
<div class="t" style="left:445.80px;top:704.40px;font-size:13px;line-height:13px;font-weight:bold;color:#545454;">Sub-Total</div>
<div class="t" style="right:1284.00px;top:704.40px;font-size:13px;line-height:13px;font-weight:bold;color:#545454;">18,834</div>
<div class="t" style="right:1193.00px;top:704.40px;font-size:13px;line-height:13px;font-weight:bold;color:#545454;">17,031</div>
<div class="t" style="right:1102.00px;top:704.40px;font-size:13px;line-height:13px;font-weight:bold;color:#545454;">20,543</div>
<div class="t" style="right:1010.70px;top:704.40px;font-size:13px;line-height:13px;font-weight:bold;color:#545454;">1,803</div>
<div class="t" style="right:922.80px;top:704.40px;font-size:13px;line-height:13px;font-weight:bold;color:#545454;">9.58%</div>
<div style="position:absolute;left:948.04px;top:704.80px;width:0;height:0;border-left:5.40px solid transparent;border-right:5.40px solid transparent;border-bottom:10.60px solid #545454"></div>
<div class="t" style="right:824.00px;top:704.40px;font-size:13px;line-height:13px;font-weight:bold;color:#545454;">(1,709)</div>
<div class="t" style="right:740.70px;top:704.40px;font-size:13px;line-height:13px;font-weight:bold;color:#ee0000;">9.07%</div>
<div style="position:absolute;left:1129.94px;top:704.10px;width:0;height:0;border-left:5.50px solid transparent;border-right:5.50px solid transparent;border-top:11.00px solid #ee0000"></div>
<div class="t" style="right:632.60px;top:704.40px;font-size:13px;line-height:13px;font-weight:bold;color:#545454;">148,783</div>
<div class="t" style="right:539.60px;top:704.40px;font-size:13px;line-height:13px;font-weight:bold;color:#545454;">134,542</div>
<div class="t" style="right:445.80px;top:704.40px;font-size:13px;line-height:13px;font-weight:bold;color:#545454;">162,293</div>
<div class="t" style="right:352.50px;top:704.40px;font-size:13px;line-height:13px;font-weight:bold;color:#545454;">14,241</div>
<div class="t" style="right:262.50px;top:704.40px;font-size:13px;line-height:13px;font-weight:bold;color:#545454;">9.57%</div>
<div style="position:absolute;left:1608.34px;top:704.80px;width:0;height:0;border-left:5.40px solid transparent;border-right:5.40px solid transparent;border-bottom:10.60px solid #545454"></div>
<div class="t" style="right:160.80px;top:704.40px;font-size:13px;line-height:13px;font-weight:bold;color:#545454;">(13,510)</div>
<div class="t" style="right:75.60px;top:704.40px;font-size:13px;line-height:13px;font-weight:bold;color:#ee0000;">9.08%</div>
<div style="position:absolute;left:1795.04px;top:704.10px;width:0;height:0;border-left:5.50px solid transparent;border-right:5.50px solid transparent;border-top:11.00px solid #ee0000"></div>
<div class="t" style="left:133.40px;top:724.60px;font-size:13px;line-height:13px;font-weight:bold;color:#545454;">VEND0048</div>
<div class="t" style="left:230.60px;top:724.60px;font-size:13px;line-height:13px;font-weight:bold;color:#545454;letter-spacing:-0.12px;">Barkside Imports Group</div>
<div class="t" style="left:331.80px;top:744.80px;font-size:13px;line-height:13px;color:#595959;">RM-PKG-018</div>
<div class="t" style="left:429.70px;top:744.80px;font-size:13px;line-height:13px;color:#595959;">Retail Packaging</div>
<div class="t" style="right:1284.00px;top:744.80px;font-size:13px;line-height:13px;color:#595959;">8,312</div>
<div class="t" style="right:1193.00px;top:744.80px;font-size:13px;line-height:13px;color:#595959;">7,617</div>
<div class="t" style="right:1102.00px;top:744.80px;font-size:13px;line-height:13px;color:#595959;">9,129</div>
<div class="t" style="right:1010.70px;top:744.80px;font-size:13px;line-height:13px;color:#595959;">695</div>
<div class="t" style="right:922.80px;top:744.80px;font-size:13px;line-height:13px;color:#595959;">8.36%</div>
<div style="position:absolute;left:948.04px;top:745.20px;width:0;height:0;border-left:5.40px solid transparent;border-right:5.40px solid transparent;border-bottom:10.60px solid #595959"></div>
<div class="t" style="right:824.00px;top:744.80px;font-size:13px;line-height:13px;color:#595959;">(817)</div>
<div class="t" style="right:740.70px;top:744.80px;font-size:13px;line-height:13px;color:#ee0000;">9.83%</div>
<div style="position:absolute;left:1129.94px;top:744.50px;width:0;height:0;border-left:5.50px solid transparent;border-right:5.50px solid transparent;border-top:11.00px solid #ee0000"></div>
<div class="t" style="right:632.60px;top:744.80px;font-size:13px;line-height:13px;color:#595959;">65,666</div>
<div class="t" style="right:539.60px;top:744.80px;font-size:13px;line-height:13px;color:#595959;">60,176</div>
<div class="t" style="right:445.80px;top:744.80px;font-size:13px;line-height:13px;color:#595959;">72,120</div>
<div class="t" style="right:352.50px;top:744.80px;font-size:13px;line-height:13px;color:#595959;">5,490</div>
<div class="t" style="right:262.50px;top:744.80px;font-size:13px;line-height:13px;color:#595959;">8.36%</div>
<div style="position:absolute;left:1608.34px;top:745.20px;width:0;height:0;border-left:5.40px solid transparent;border-right:5.40px solid transparent;border-bottom:10.60px solid #595959"></div>
<div class="t" style="right:160.80px;top:744.80px;font-size:13px;line-height:13px;color:#595959;">(6,455)</div>
<div class="t" style="right:75.60px;top:744.80px;font-size:13px;line-height:13px;color:#ee0000;">9.83%</div>
<div style="position:absolute;left:1795.04px;top:744.50px;width:0;height:0;border-left:5.50px solid transparent;border-right:5.50px solid transparent;border-top:11.00px solid #ee0000"></div>
<div class="t" style="left:445.80px;top:771.00px;font-size:13px;line-height:13px;font-weight:bold;color:#545454;">Sub-Total</div>
<div class="t" style="right:1284.00px;top:771.00px;font-size:13px;line-height:13px;font-weight:bold;color:#545454;">8,312</div>
<div class="t" style="right:1193.00px;top:771.00px;font-size:13px;line-height:13px;font-weight:bold;color:#545454;">7,617</div>
<div class="t" style="right:1102.00px;top:771.00px;font-size:13px;line-height:13px;font-weight:bold;color:#545454;">9,129</div>
<div class="t" style="right:1010.70px;top:771.00px;font-size:13px;line-height:13px;font-weight:bold;color:#545454;">695</div>
<div class="t" style="right:922.80px;top:771.00px;font-size:13px;line-height:13px;font-weight:bold;color:#545454;">8.36%</div>
<div style="position:absolute;left:948.04px;top:771.40px;width:0;height:0;border-left:5.40px solid transparent;border-right:5.40px solid transparent;border-bottom:10.60px solid #545454"></div>
<div class="t" style="right:824.00px;top:771.00px;font-size:13px;line-height:13px;font-weight:bold;color:#545454;">(817)</div>
<div class="t" style="right:740.70px;top:771.00px;font-size:13px;line-height:13px;font-weight:bold;color:#ee0000;">9.83%</div>
<div style="position:absolute;left:1129.94px;top:770.70px;width:0;height:0;border-left:5.50px solid transparent;border-right:5.50px solid transparent;border-top:11.00px solid #ee0000"></div>
<div class="t" style="right:632.60px;top:771.00px;font-size:13px;line-height:13px;font-weight:bold;color:#545454;">65,666</div>
<div class="t" style="right:539.60px;top:771.00px;font-size:13px;line-height:13px;font-weight:bold;color:#545454;">60,176</div>
<div class="t" style="right:445.80px;top:771.00px;font-size:13px;line-height:13px;font-weight:bold;color:#545454;">72,120</div>
<div class="t" style="right:352.50px;top:771.00px;font-size:13px;line-height:13px;font-weight:bold;color:#545454;">5,490</div>
<div class="t" style="right:262.50px;top:771.00px;font-size:13px;line-height:13px;font-weight:bold;color:#545454;">8.36%</div>
<div style="position:absolute;left:1608.34px;top:771.40px;width:0;height:0;border-left:5.40px solid transparent;border-right:5.40px solid transparent;border-bottom:10.60px solid #545454"></div>
<div class="t" style="right:160.80px;top:771.00px;font-size:13px;line-height:13px;font-weight:bold;color:#545454;">(6,455)</div>
<div class="t" style="right:75.60px;top:771.00px;font-size:13px;line-height:13px;font-weight:bold;color:#ee0000;">9.83%</div>
<div style="position:absolute;left:1795.04px;top:770.70px;width:0;height:0;border-left:5.50px solid transparent;border-right:5.50px solid transparent;border-top:11.00px solid #ee0000"></div>
<div class="t" style="left:133.40px;top:791.20px;font-size:13px;line-height:13px;font-weight:bold;color:#545454;">VEND0049</div>
<div class="t" style="left:230.60px;top:791.20px;font-size:13px;line-height:13px;font-weight:bold;color:#545454;letter-spacing:-0.12px;">RubberWorks Inc.</div>
<div class="t" style="left:331.80px;top:811.40px;font-size:13px;line-height:13px;color:#595959;">RM-RUB-014</div>
<div class="t" style="left:429.70px;top:811.40px;font-size:13px;line-height:13px;color:#595959;">Rubber Pellet</div>
<div class="t" style="right:1284.00px;top:811.40px;font-size:13px;line-height:13px;color:#595959;">3,061</div>
<div class="t" style="right:1193.00px;top:811.40px;font-size:13px;line-height:13px;color:#595959;">2,726</div>
<div class="t" style="right:1102.00px;top:811.40px;font-size:13px;line-height:13px;color:#595959;">3,420</div>
<div class="t" style="right:1010.70px;top:811.40px;font-size:13px;line-height:13px;color:#595959;">335</div>
<div class="t" style="right:922.80px;top:811.40px;font-size:13px;line-height:13px;color:#595959;">10.94%</div>
<div style="position:absolute;left:940.81px;top:811.80px;width:0;height:0;border-left:5.40px solid transparent;border-right:5.40px solid transparent;border-bottom:10.60px solid #595959"></div>
<div class="t" style="right:824.00px;top:811.40px;font-size:13px;line-height:13px;color:#595959;">(360)</div>
<div class="t" style="right:740.70px;top:811.40px;font-size:13px;line-height:13px;color:#ee0000;">11.75%</div>
<div style="position:absolute;left:1122.71px;top:811.10px;width:0;height:0;border-left:5.50px solid transparent;border-right:5.50px solid transparent;border-top:11.00px solid #ee0000"></div>
<div class="t" style="right:632.60px;top:811.40px;font-size:13px;line-height:13px;color:#595959;">24,180</div>
<div class="t" style="right:539.60px;top:811.40px;font-size:13px;line-height:13px;color:#595959;">21,538</div>
<div class="t" style="right:445.80px;top:811.40px;font-size:13px;line-height:13px;color:#595959;">27,022</div>
<div class="t" style="right:352.50px;top:811.40px;font-size:13px;line-height:13px;color:#595959;">2,642</div>
<div class="t" style="right:262.50px;top:811.40px;font-size:13px;line-height:13px;color:#595959;">10.93%</div>
<div style="position:absolute;left:1601.11px;top:811.80px;width:0;height:0;border-left:5.40px solid transparent;border-right:5.40px solid transparent;border-bottom:10.60px solid #595959"></div>
<div class="t" style="right:160.80px;top:811.40px;font-size:13px;line-height:13px;color:#595959;">(2,841)</div>
<div class="t" style="right:75.60px;top:811.40px;font-size:13px;line-height:13px;color:#ee0000;">11.75%</div>
<div style="position:absolute;left:1787.81px;top:811.10px;width:0;height:0;border-left:5.50px solid transparent;border-right:5.50px solid transparent;border-top:11.00px solid #ee0000"></div>
<div class="t" style="left:331.80px;top:831.60px;font-size:13px;line-height:13px;color:#595959;">RM-RUB-021</div>
<div class="t" style="left:429.70px;top:831.60px;font-size:13px;line-height:13px;color:#595959;">Rubber Pellet</div>
<div class="t" style="right:1284.00px;top:831.60px;font-size:13px;line-height:13px;color:#595959;">6,588</div>
<div class="t" style="right:1193.00px;top:831.60px;font-size:13px;line-height:13px;color:#595959;">6,084</div>
<div class="t" style="right:1102.00px;top:831.60px;font-size:13px;line-height:13px;color:#595959;">7,117</div>
<div class="t" style="right:1010.70px;top:831.60px;font-size:13px;line-height:13px;color:#595959;">505</div>
<div class="t" style="right:922.80px;top:831.60px;font-size:13px;line-height:13px;color:#595959;">7.66%</div>
<div style="position:absolute;left:948.04px;top:832.00px;width:0;height:0;border-left:5.40px solid transparent;border-right:5.40px solid transparent;border-bottom:10.60px solid #595959"></div>
<div class="t" style="right:824.00px;top:831.60px;font-size:13px;line-height:13px;color:#595959;">(529)</div>
<div class="t" style="right:740.70px;top:831.60px;font-size:13px;line-height:13px;color:#ee0000;">8.03%</div>
<div style="position:absolute;left:1129.94px;top:831.30px;width:0;height:0;border-left:5.50px solid transparent;border-right:5.50px solid transparent;border-top:11.00px solid #ee0000"></div>
<div class="t" style="right:632.60px;top:831.60px;font-size:13px;line-height:13px;color:#595959;">52,050</div>
<div class="t" style="right:539.60px;top:831.60px;font-size:13px;line-height:13px;color:#595959;">48,068</div>
<div class="t" style="right:445.80px;top:831.60px;font-size:13px;line-height:13px;color:#595959;">56,232</div>
<div class="t" style="right:352.50px;top:831.60px;font-size:13px;line-height:13px;color:#595959;">3,981</div>
<div class="t" style="right:262.50px;top:831.60px;font-size:13px;line-height:13px;color:#595959;">7.65%</div>
<div style="position:absolute;left:1608.34px;top:832.00px;width:0;height:0;border-left:5.40px solid transparent;border-right:5.40px solid transparent;border-bottom:10.60px solid #595959"></div>
<div class="t" style="right:160.80px;top:831.60px;font-size:13px;line-height:13px;color:#595959;">(4,182)</div>
<div class="t" style="right:75.60px;top:831.60px;font-size:13px;line-height:13px;color:#ee0000;">8.03%</div>
<div style="position:absolute;left:1795.04px;top:831.30px;width:0;height:0;border-left:5.50px solid transparent;border-right:5.50px solid transparent;border-top:11.00px solid #ee0000"></div>
<div class="t" style="left:331.80px;top:851.80px;font-size:13px;line-height:13px;color:#595959;">RM-RUB-023</div>
<div class="t" style="left:429.70px;top:851.80px;font-size:13px;line-height:13px;color:#595959;">Rubber Pellet</div>
<div class="t" style="right:1284.00px;top:851.80px;font-size:13px;line-height:13px;color:#595959;">3,318</div>
<div class="t" style="right:1193.00px;top:851.80px;font-size:13px;line-height:13px;color:#595959;">2,974</div>
<div class="t" style="right:1102.00px;top:851.80px;font-size:13px;line-height:13px;color:#595959;">3,667</div>
<div class="t" style="right:1010.70px;top:851.80px;font-size:13px;line-height:13px;color:#595959;">343</div>
<div class="t" style="right:922.80px;top:851.80px;font-size:13px;line-height:13px;color:#595959;">10.35%</div>
<div style="position:absolute;left:940.81px;top:852.20px;width:0;height:0;border-left:5.40px solid transparent;border-right:5.40px solid transparent;border-bottom:10.60px solid #595959"></div>
<div class="t" style="right:824.00px;top:851.80px;font-size:13px;line-height:13px;color:#595959;">(350)</div>
<div class="t" style="right:740.70px;top:851.80px;font-size:13px;line-height:13px;color:#ee0000;">10.54%</div>
<div style="position:absolute;left:1122.71px;top:851.50px;width:0;height:0;border-left:5.50px solid transparent;border-right:5.50px solid transparent;border-top:11.00px solid #ee0000"></div>
<div class="t" style="right:632.60px;top:851.80px;font-size:13px;line-height:13px;color:#595959;">26,216</div>
<div class="t" style="right:539.60px;top:851.80px;font-size:13px;line-height:13px;color:#595959;">23,501</div>
<div class="t" style="right:445.80px;top:851.80px;font-size:13px;line-height:13px;color:#595959;">28,966</div>
<div class="t" style="right:352.50px;top:851.80px;font-size:13px;line-height:13px;color:#595959;">2,716</div>
<div class="t" style="right:262.50px;top:851.80px;font-size:13px;line-height:13px;color:#595959;">10.36%</div>
<div style="position:absolute;left:1601.11px;top:852.20px;width:0;height:0;border-left:5.40px solid transparent;border-right:5.40px solid transparent;border-bottom:10.60px solid #595959"></div>
<div class="t" style="right:160.80px;top:851.80px;font-size:13px;line-height:13px;color:#595959;">(2,750)</div>
<div class="t" style="right:75.60px;top:851.80px;font-size:13px;line-height:13px;color:#ee0000;">10.49%</div>
<div style="position:absolute;left:1787.81px;top:851.50px;width:0;height:0;border-left:5.50px solid transparent;border-right:5.50px solid transparent;border-top:11.00px solid #ee0000"></div>
<div class="t" style="left:331.80px;top:872.00px;font-size:13px;line-height:13px;color:#595959;">RM-RUB-028</div>
<div class="t" style="left:429.70px;top:872.00px;font-size:13px;line-height:13px;color:#595959;">Rubber Pellet</div>
<div class="t" style="right:1284.00px;top:872.00px;font-size:13px;line-height:13px;color:#595959;">1,796</div>
<div class="t" style="right:1193.00px;top:872.00px;font-size:13px;line-height:13px;color:#595959;">1,605</div>
<div class="t" style="right:1102.00px;top:872.00px;font-size:13px;line-height:13px;color:#595959;">1,980</div>
<div class="t" style="right:1010.70px;top:872.00px;font-size:13px;line-height:13px;color:#595959;">191</div>
<div class="t" style="right:922.80px;top:872.00px;font-size:13px;line-height:13px;color:#595959;">10.61%</div>
<div style="position:absolute;left:940.81px;top:872.40px;width:0;height:0;border-left:5.40px solid transparent;border-right:5.40px solid transparent;border-bottom:10.60px solid #595959"></div>
<div class="t" style="right:824.00px;top:872.00px;font-size:13px;line-height:13px;color:#595959;">(184)</div>
<div class="t" style="right:740.70px;top:872.00px;font-size:13px;line-height:13px;color:#ee0000;">10.27%</div>
<div style="position:absolute;left:1122.71px;top:871.70px;width:0;height:0;border-left:5.50px solid transparent;border-right:5.50px solid transparent;border-top:11.00px solid #ee0000"></div>
<div class="t" style="right:632.60px;top:872.00px;font-size:13px;line-height:13px;color:#595959;">14,185</div>
<div class="t" style="right:539.60px;top:872.00px;font-size:13px;line-height:13px;color:#595959;">12,683</div>
<div class="t" style="right:445.80px;top:872.00px;font-size:13px;line-height:13px;color:#595959;">15,638</div>
<div class="t" style="right:352.50px;top:872.00px;font-size:13px;line-height:13px;color:#595959;">1,502</div>
<div class="t" style="right:262.50px;top:872.00px;font-size:13px;line-height:13px;color:#595959;">10.59%</div>
<div style="position:absolute;left:1601.11px;top:872.40px;width:0;height:0;border-left:5.40px solid transparent;border-right:5.40px solid transparent;border-bottom:10.60px solid #595959"></div>
<div class="t" style="right:160.80px;top:872.00px;font-size:13px;line-height:13px;color:#595959;">(1,453)</div>
<div class="t" style="right:75.60px;top:872.00px;font-size:13px;line-height:13px;color:#ee0000;">10.24%</div>
<div style="position:absolute;left:1787.81px;top:871.70px;width:0;height:0;border-left:5.50px solid transparent;border-right:5.50px solid transparent;border-top:11.00px solid #ee0000"></div>
<div class="t" style="left:331.80px;top:892.20px;font-size:13px;line-height:13px;color:#595959;">RM-RUB-033</div>
<div class="t" style="left:429.70px;top:892.20px;font-size:13px;line-height:13px;color:#595959;">Rubber Pellet</div>
<div class="t" style="right:1284.00px;top:892.20px;font-size:13px;line-height:13px;color:#595959;">3,498</div>
<div class="t" style="right:1193.00px;top:892.20px;font-size:13px;line-height:13px;color:#595959;">3,118</div>
<div class="t" style="right:1102.00px;top:892.20px;font-size:13px;line-height:13px;color:#595959;">3,794</div>
<div class="t" style="right:1010.70px;top:892.20px;font-size:13px;line-height:13px;color:#595959;">380</div>
<div class="t" style="right:922.80px;top:892.20px;font-size:13px;line-height:13px;color:#595959;">10.87%</div>
<div style="position:absolute;left:940.81px;top:892.60px;width:0;height:0;border-left:5.40px solid transparent;border-right:5.40px solid transparent;border-bottom:10.60px solid #595959"></div>
<div class="t" style="right:824.00px;top:892.20px;font-size:13px;line-height:13px;color:#595959;">(296)</div>
<div class="t" style="right:740.70px;top:892.20px;font-size:13px;line-height:13px;color:#ee0000;">8.45%</div>
<div style="position:absolute;left:1129.94px;top:891.90px;width:0;height:0;border-left:5.50px solid transparent;border-right:5.50px solid transparent;border-top:11.00px solid #ee0000"></div>
<div class="t" style="right:632.60px;top:892.20px;font-size:13px;line-height:13px;color:#595959;">27,641</div>
<div class="t" style="right:539.60px;top:892.20px;font-size:13px;line-height:13px;color:#595959;">24,627</div>
<div class="t" style="right:445.80px;top:892.20px;font-size:13px;line-height:13px;color:#595959;">29,968</div>
<div class="t" style="right:352.50px;top:892.20px;font-size:13px;line-height:13px;color:#595959;">3,014</div>
<div class="t" style="right:262.50px;top:892.20px;font-size:13px;line-height:13px;color:#595959;">10.90%</div>
<div style="position:absolute;left:1601.11px;top:892.60px;width:0;height:0;border-left:5.40px solid transparent;border-right:5.40px solid transparent;border-bottom:10.60px solid #595959"></div>
<div class="t" style="right:160.80px;top:892.20px;font-size:13px;line-height:13px;color:#595959;">(2,327)</div>
<div class="t" style="right:75.60px;top:892.20px;font-size:13px;line-height:13px;color:#ee0000;">8.42%</div>
<div style="position:absolute;left:1795.04px;top:891.90px;width:0;height:0;border-left:5.50px solid transparent;border-right:5.50px solid transparent;border-top:11.00px solid #ee0000"></div>
<div class="t" style="left:331.80px;top:912.40px;font-size:13px;line-height:13px;color:#595959;">RM-RUB-034</div>
<div class="t" style="left:429.70px;top:912.40px;font-size:13px;line-height:13px;color:#595959;">Rubber Pellet</div>
<div class="t" style="right:1284.00px;top:912.40px;font-size:13px;line-height:13px;color:#595959;">15,054</div>
<div class="t" style="right:1193.00px;top:912.40px;font-size:13px;line-height:13px;color:#595959;">13,523</div>
<div class="t" style="right:1102.00px;top:912.40px;font-size:13px;line-height:13px;color:#595959;">16,582</div>
<div class="t" style="right:1010.70px;top:912.40px;font-size:13px;line-height:13px;color:#595959;">1,531</div>
<div class="t" style="right:922.80px;top:912.40px;font-size:13px;line-height:13px;color:#595959;">10.17%</div>
<div style="position:absolute;left:940.81px;top:912.80px;width:0;height:0;border-left:5.40px solid transparent;border-right:5.40px solid transparent;border-bottom:10.60px solid #595959"></div>
<div class="t" style="right:824.00px;top:912.40px;font-size:13px;line-height:13px;color:#595959;">(1,528)</div>
<div class="t" style="right:740.70px;top:912.40px;font-size:13px;line-height:13px;color:#ee0000;">10.15%</div>
<div style="position:absolute;left:1122.71px;top:912.10px;width:0;height:0;border-left:5.50px solid transparent;border-right:5.50px solid transparent;border-top:11.00px solid #ee0000"></div>
<div class="t" style="right:632.60px;top:912.40px;font-size:13px;line-height:13px;color:#595959;">118,916</div>
<div class="t" style="right:539.60px;top:912.40px;font-size:13px;line-height:13px;color:#595959;">106,848</div>
<div class="t" style="right:445.80px;top:912.40px;font-size:13px;line-height:13px;color:#595959;">130,990</div>
<div class="t" style="right:352.50px;top:912.40px;font-size:13px;line-height:13px;color:#595959;">12,068</div>
<div class="t" style="right:262.50px;top:912.40px;font-size:13px;line-height:13px;color:#595959;">10.15%</div>
<div style="position:absolute;left:1601.11px;top:912.80px;width:0;height:0;border-left:5.40px solid transparent;border-right:5.40px solid transparent;border-bottom:10.60px solid #595959"></div>
<div class="t" style="right:160.80px;top:912.40px;font-size:13px;line-height:13px;color:#595959;">(12,074)</div>
<div class="t" style="right:75.60px;top:912.40px;font-size:13px;line-height:13px;color:#ee0000;">10.15%</div>
<div style="position:absolute;left:1787.81px;top:912.10px;width:0;height:0;border-left:5.50px solid transparent;border-right:5.50px solid transparent;border-top:11.00px solid #ee0000"></div>
<div class="t" style="left:331.80px;top:932.60px;font-size:13px;line-height:13px;color:#595959;">RM-RUB-039</div>
<div class="t" style="left:429.70px;top:932.60px;font-size:13px;line-height:13px;color:#595959;">Rubber Pellet</div>
<div class="t" style="right:1284.00px;top:932.60px;font-size:13px;line-height:13px;color:#595959;">1,937</div>
<div class="t" style="right:1193.00px;top:932.60px;font-size:13px;line-height:13px;color:#595959;">1,763</div>
<div class="t" style="right:1102.00px;top:932.60px;font-size:13px;line-height:13px;color:#595959;">2,132</div>
<div class="t" style="right:1010.70px;top:932.60px;font-size:13px;line-height:13px;color:#595959;">174</div>
<div class="t" style="right:922.80px;top:932.60px;font-size:13px;line-height:13px;color:#595959;">8.98%</div>
<div style="position:absolute;left:948.04px;top:933.00px;width:0;height:0;border-left:5.40px solid transparent;border-right:5.40px solid transparent;border-bottom:10.60px solid #595959"></div>
<div class="t" style="right:824.00px;top:932.60px;font-size:13px;line-height:13px;color:#595959;">(195)</div>
<div class="t" style="right:740.70px;top:932.60px;font-size:13px;line-height:13px;color:#ee0000;">10.05%</div>
<div style="position:absolute;left:1122.71px;top:932.30px;width:0;height:0;border-left:5.50px solid transparent;border-right:5.50px solid transparent;border-top:11.00px solid #ee0000"></div>
<div class="t" style="right:632.60px;top:932.60px;font-size:13px;line-height:13px;color:#595959;">15,307</div>
<div class="t" style="right:539.60px;top:932.60px;font-size:13px;line-height:13px;color:#595959;">13,928</div>
<div class="t" style="right:445.80px;top:932.60px;font-size:13px;line-height:13px;color:#595959;">16,842</div>
<div class="t" style="right:352.50px;top:932.60px;font-size:13px;line-height:13px;color:#595959;">1,379</div>
<div class="t" style="right:262.50px;top:932.60px;font-size:13px;line-height:13px;color:#595959;">9.01%</div>
<div style="position:absolute;left:1608.34px;top:933.00px;width:0;height:0;border-left:5.40px solid transparent;border-right:5.40px solid transparent;border-bottom:10.60px solid #595959"></div>
<div class="t" style="right:160.80px;top:932.60px;font-size:13px;line-height:13px;color:#595959;">(1,535)</div>
<div class="t" style="right:75.60px;top:932.60px;font-size:13px;line-height:13px;color:#ee0000;">10.03%</div>
<div style="position:absolute;left:1787.81px;top:932.30px;width:0;height:0;border-left:5.50px solid transparent;border-right:5.50px solid transparent;border-top:11.00px solid #ee0000"></div>
<div class="t" style="left:445.80px;top:958.80px;font-size:13px;line-height:13px;font-weight:bold;color:#545454;">Sub-Total</div>
<div class="t" style="right:1284.00px;top:958.80px;font-size:13px;line-height:13px;font-weight:bold;color:#545454;">35,252</div>
<div class="t" style="right:1193.00px;top:958.80px;font-size:13px;line-height:13px;font-weight:bold;color:#545454;">31,793</div>
<div class="t" style="right:1102.00px;top:958.80px;font-size:13px;line-height:13px;font-weight:bold;color:#545454;">38,693</div>
<div class="t" style="right:1010.70px;top:958.80px;font-size:13px;line-height:13px;font-weight:bold;color:#545454;">3,458</div>
<div class="t" style="right:922.80px;top:958.80px;font-size:13px;line-height:13px;font-weight:bold;color:#545454;">9.81%</div>
<div style="position:absolute;left:948.04px;top:959.20px;width:0;height:0;border-left:5.40px solid transparent;border-right:5.40px solid transparent;border-bottom:10.60px solid #545454"></div>
<div class="t" style="right:824.00px;top:958.80px;font-size:13px;line-height:13px;font-weight:bold;color:#545454;">(3,441)</div>
<div class="t" style="right:740.70px;top:958.80px;font-size:13px;line-height:13px;font-weight:bold;color:#ee0000;">9.76%</div>
<div style="position:absolute;left:1129.94px;top:958.50px;width:0;height:0;border-left:5.50px solid transparent;border-right:5.50px solid transparent;border-top:11.00px solid #ee0000"></div>
<div class="t" style="right:632.60px;top:958.80px;font-size:13px;line-height:13px;font-weight:bold;color:#545454;">278,495</div>
<div class="t" style="right:539.60px;top:958.80px;font-size:13px;line-height:13px;font-weight:bold;color:#545454;">251,193</div>
<div class="t" style="right:445.80px;top:958.80px;font-size:13px;line-height:13px;font-weight:bold;color:#545454;">305,658</div>
<div class="t" style="right:352.50px;top:958.80px;font-size:13px;line-height:13px;font-weight:bold;color:#545454;">27,302</div>
<div class="t" style="right:262.50px;top:958.80px;font-size:13px;line-height:13px;font-weight:bold;color:#545454;">9.80%</div>
<div style="position:absolute;left:1608.34px;top:959.20px;width:0;height:0;border-left:5.40px solid transparent;border-right:5.40px solid transparent;border-bottom:10.60px solid #545454"></div>
<div class="t" style="right:160.80px;top:958.80px;font-size:13px;line-height:13px;font-weight:bold;color:#545454;">(27,163)</div>
<div class="t" style="right:75.60px;top:958.80px;font-size:13px;line-height:13px;font-weight:bold;color:#ee0000;">9.75%</div>
<div style="position:absolute;left:1795.04px;top:958.50px;width:0;height:0;border-left:5.50px solid transparent;border-right:5.50px solid transparent;border-top:11.00px solid #ee0000"></div>
<div class="t" style="left:133.40px;top:979.00px;font-size:13px;line-height:13px;font-weight:bold;color:#545454;">VEND0050</div>
<div class="t" style="left:230.60px;top:979.00px;font-size:13px;line-height:13px;font-weight:bold;color:#545454;letter-spacing:-0.12px;">Interactive Pet Gear Co.</div>
<div class="t" style="left:331.80px;top:999.20px;font-size:13px;line-height:13px;color:#595959;">RM-INK-006</div>
<div class="t" style="left:429.70px;top:999.20px;font-size:13px;line-height:13px;color:#595959;">Branding Ink</div>
<div class="t" style="right:1284.00px;top:999.20px;font-size:13px;line-height:13px;color:#595959;">1,026</div>
<div class="t" style="right:1193.00px;top:999.20px;font-size:13px;line-height:13px;color:#595959;">969</div>
<div class="t" style="right:1102.00px;top:999.20px;font-size:13px;line-height:13px;color:#595959;">1,111</div>
<div class="t" style="right:1010.70px;top:999.20px;font-size:13px;line-height:13px;color:#595959;">57</div>
<div class="t" style="right:922.80px;top:999.20px;font-size:13px;line-height:13px;color:#595959;">5.52%</div>
<div style="position:absolute;left:948.04px;top:999.60px;width:0;height:0;border-left:5.40px solid transparent;border-right:5.40px solid transparent;border-bottom:10.60px solid #595959"></div>
<div class="t" style="right:824.00px;top:999.20px;font-size:13px;line-height:13px;color:#595959;">(85)</div>
<div class="t" style="right:740.70px;top:999.20px;font-size:13px;line-height:13px;color:#ee0000;">8.31%</div>
<div style="position:absolute;left:1129.94px;top:998.90px;width:0;height:0;border-left:5.50px solid transparent;border-right:5.50px solid transparent;border-top:11.00px solid #ee0000"></div>
<div class="t" style="right:632.60px;top:999.20px;font-size:13px;line-height:13px;color:#595959;">8,117</div>
<div class="t" style="right:539.60px;top:999.20px;font-size:13px;line-height:13px;color:#595959;">7,651</div>
<div class="t" style="right:445.80px;top:999.20px;font-size:13px;line-height:13px;color:#595959;">8,791</div>
<div class="t" style="right:352.50px;top:999.20px;font-size:13px;line-height:13px;color:#595959;">467</div>
<div class="t" style="right:262.50px;top:999.20px;font-size:13px;line-height:13px;color:#595959;">5.75%</div>
<div style="position:absolute;left:1608.34px;top:999.60px;width:0;height:0;border-left:5.40px solid transparent;border-right:5.40px solid transparent;border-bottom:10.60px solid #595959"></div>
<div class="t" style="right:160.80px;top:999.20px;font-size:13px;line-height:13px;color:#595959;">(674)</div>
<div class="t" style="right:75.60px;top:999.20px;font-size:13px;line-height:13px;color:#ee0000;">8.30%</div>
<div style="position:absolute;left:1795.04px;top:998.90px;width:0;height:0;border-left:5.50px solid transparent;border-right:5.50px solid transparent;border-top:11.00px solid #ee0000"></div>
<div class="t" style="left:331.80px;top:1019.40px;font-size:13px;line-height:13px;color:#595959;">RM-INK-011</div>
<div class="t" style="left:429.70px;top:1019.40px;font-size:13px;line-height:13px;color:#595959;">Branding Ink</div>
<div class="t" style="right:1284.00px;top:1019.40px;font-size:13px;line-height:13px;color:#595959;">6,564</div>
<div class="t" style="right:1193.00px;top:1019.40px;font-size:13px;line-height:13px;color:#595959;">6,149</div>
<div class="t" style="right:1102.00px;top:1019.40px;font-size:13px;line-height:13px;color:#595959;">7,262</div>
<div class="t" style="right:1010.70px;top:1019.40px;font-size:13px;line-height:13px;color:#595959;">414</div>
<div class="t" style="right:922.80px;top:1019.40px;font-size:13px;line-height:13px;color:#595959;">6.31%</div>
<div style="position:absolute;left:948.04px;top:1019.80px;width:0;height:0;border-left:5.40px solid transparent;border-right:5.40px solid transparent;border-bottom:10.60px solid #595959"></div>
<div class="t" style="right:824.00px;top:1019.40px;font-size:13px;line-height:13px;color:#595959;">(698)</div>
<div class="t" style="right:740.70px;top:1019.40px;font-size:13px;line-height:13px;color:#ee0000;">10.63%</div>
<div style="position:absolute;left:1122.71px;top:1019.10px;width:0;height:0;border-left:5.50px solid transparent;border-right:5.50px solid transparent;border-top:11.00px solid #ee0000"></div>
<div class="t" style="right:632.60px;top:1019.40px;font-size:13px;line-height:13px;color:#595959;">51,854</div>
<div class="t" style="right:539.60px;top:1019.40px;font-size:13px;line-height:13px;color:#595959;">48,578</div>
<div class="t" style="right:445.80px;top:1019.40px;font-size:13px;line-height:13px;color:#595959;">57,368</div>
<div class="t" style="right:352.50px;top:1019.40px;font-size:13px;line-height:13px;color:#595959;">3,276</div>
<div class="t" style="right:262.50px;top:1019.40px;font-size:13px;line-height:13px;color:#595959;">6.32%</div>
<div style="position:absolute;left:1608.34px;top:1019.80px;width:0;height:0;border-left:5.40px solid transparent;border-right:5.40px solid transparent;border-bottom:10.60px solid #595959"></div>
<div class="t" style="right:160.80px;top:1019.40px;font-size:13px;line-height:13px;color:#595959;">(5,514)</div>
<div class="t" style="right:75.60px;top:1019.40px;font-size:13px;line-height:13px;color:#ee0000;">10.63%</div>
<div style="position:absolute;left:1787.81px;top:1019.10px;width:0;height:0;border-left:5.50px solid transparent;border-right:5.50px solid transparent;border-top:11.00px solid #ee0000"></div>
<div class="t" style="left:331.80px;top:1039.60px;font-size:13px;line-height:13px;color:#595959;">RM-INK-017</div>
<div class="t" style="left:429.70px;top:1039.60px;font-size:13px;line-height:13px;color:#595959;">Branding Ink</div>
<div class="t" style="right:1284.00px;top:1039.60px;font-size:13px;line-height:13px;color:#595959;">3,157</div>
<div class="t" style="right:1193.00px;top:1039.60px;font-size:13px;line-height:13px;color:#595959;">2,926</div>
<div class="t" style="right:1102.00px;top:1039.60px;font-size:13px;line-height:13px;color:#595959;">3,449</div>
<div class="t" style="right:1010.70px;top:1039.60px;font-size:13px;line-height:13px;color:#595959;">231</div>
<div class="t" style="right:922.80px;top:1039.60px;font-size:13px;line-height:13px;color:#595959;">7.31%</div>
<div style="position:absolute;left:948.04px;top:1040.00px;width:0;height:0;border-left:5.40px solid transparent;border-right:5.40px solid transparent;border-bottom:10.60px solid #595959"></div>
<div class="t" style="right:824.00px;top:1039.60px;font-size:13px;line-height:13px;color:#595959;">(292)</div>
<div class="t" style="right:740.70px;top:1039.60px;font-size:13px;line-height:13px;color:#ee0000;">9.25%</div>
<div style="position:absolute;left:1129.94px;top:1039.30px;width:0;height:0;border-left:5.50px solid transparent;border-right:5.50px solid transparent;border-top:11.00px solid #ee0000"></div>
<div class="t" style="right:632.60px;top:1039.60px;font-size:13px;line-height:13px;color:#595959;">24,934</div>
<div class="t" style="right:539.60px;top:1039.60px;font-size:13px;line-height:13px;color:#595959;">23,110</div>
<div class="t" style="right:445.80px;top:1039.60px;font-size:13px;line-height:13px;color:#595959;">27,243</div>
<div class="t" style="right:352.50px;top:1039.60px;font-size:13px;line-height:13px;color:#595959;">1,824</div>
<div class="t" style="right:262.50px;top:1039.60px;font-size:13px;line-height:13px;color:#595959;">7.31%</div>
<div style="position:absolute;left:1608.34px;top:1040.00px;width:0;height:0;border-left:5.40px solid transparent;border-right:5.40px solid transparent;border-bottom:10.60px solid #595959"></div>
<div class="t" style="right:160.80px;top:1039.60px;font-size:13px;line-height:13px;color:#595959;">(2,310)</div>
<div class="t" style="right:75.60px;top:1039.60px;font-size:13px;line-height:13px;color:#ee0000;">9.26%</div>
<div style="position:absolute;left:1795.04px;top:1039.30px;width:0;height:0;border-left:5.50px solid transparent;border-right:5.50px solid transparent;border-top:11.00px solid #ee0000"></div>
<div class="t" style="left:445.80px;top:1065.80px;font-size:13px;line-height:13px;font-weight:bold;color:#545454;">Sub-Total</div>
<div class="t" style="right:1284.00px;top:1065.80px;font-size:13px;line-height:13px;font-weight:bold;color:#545454;">10,747</div>
<div class="t" style="right:1193.00px;top:1065.80px;font-size:13px;line-height:13px;font-weight:bold;color:#545454;">10,045</div>
<div class="t" style="right:1102.00px;top:1065.80px;font-size:13px;line-height:13px;font-weight:bold;color:#545454;">11,822</div>
<div class="t" style="right:1010.70px;top:1065.80px;font-size:13px;line-height:13px;font-weight:bold;color:#545454;">702</div>
<div class="t" style="right:922.80px;top:1065.80px;font-size:13px;line-height:13px;font-weight:bold;color:#545454;">6.53%</div>
<div style="position:absolute;left:948.04px;top:1066.20px;width:0;height:0;border-left:5.40px solid transparent;border-right:5.40px solid transparent;border-bottom:10.60px solid #545454"></div>
<div class="t" style="right:824.00px;top:1065.80px;font-size:13px;line-height:13px;font-weight:bold;color:#545454;">(1,075)</div>
<div class="t" style="right:740.70px;top:1065.80px;font-size:13px;line-height:13px;font-weight:bold;color:#ee0000;">10.01%</div>
<div style="position:absolute;left:1122.71px;top:1065.50px;width:0;height:0;border-left:5.50px solid transparent;border-right:5.50px solid transparent;border-top:11.00px solid #ee0000"></div>
<div class="t" style="right:632.60px;top:1065.80px;font-size:13px;line-height:13px;font-weight:bold;color:#545454;">84,904</div>
<div class="t" style="right:539.60px;top:1065.80px;font-size:13px;line-height:13px;font-weight:bold;color:#545454;">79,338</div>
<div class="t" style="right:445.80px;top:1065.80px;font-size:13px;line-height:13px;font-weight:bold;color:#545454;">93,402</div>
<div class="t" style="right:352.50px;top:1065.80px;font-size:13px;line-height:13px;font-weight:bold;color:#545454;">5,566</div>
<div class="t" style="right:262.50px;top:1065.80px;font-size:13px;line-height:13px;font-weight:bold;color:#545454;">6.56%</div>
<div style="position:absolute;left:1608.34px;top:1066.20px;width:0;height:0;border-left:5.40px solid transparent;border-right:5.40px solid transparent;border-bottom:10.60px solid #545454"></div>
<div class="t" style="right:160.80px;top:1065.80px;font-size:13px;line-height:13px;font-weight:bold;color:#545454;">(8,498)</div>
<div class="t" style="right:75.60px;top:1065.80px;font-size:13px;line-height:13px;font-weight:bold;color:#ee0000;">10.01%</div>
<div style="position:absolute;left:1787.81px;top:1065.50px;width:0;height:0;border-left:5.50px solid transparent;border-right:5.50px solid transparent;border-top:11.00px solid #ee0000"></div>
<div style="position:absolute;left:83.00px;top:355.60px;width:1.00px;height:46.40px;background:#8c8c8c"></div>
<div style="position:absolute;left:83.00px;top:355.60px;width:6.00px;height:1.00px;background:#8c8c8c"></div>
<div style="position:absolute;left:101.00px;top:365.10px;width:2.00px;height:2.00px;background:#8c8c8c"></div>
<div style="position:absolute;left:101.00px;top:385.30px;width:2.00px;height:2.00px;background:#8c8c8c"></div>
<div style="position:absolute;left:101.00px;top:398.00px;width:2.00px;height:2.00px;background:#8c8c8c"></div>
<div style="position:absolute;left:74px;top:402.00px;width:17px;height:16px;border:1px solid #b4b4b4;background:#e6e6e6"><div style="position:absolute;left:4px;top:7px;width:9px;height:2px;background:#6a6a6a"></div></div>
<div style="position:absolute;left:83.00px;top:442.40px;width:1.00px;height:26.20px;background:#8c8c8c"></div>
<div style="position:absolute;left:83.00px;top:442.40px;width:6.00px;height:1.00px;background:#8c8c8c"></div>
<div style="position:absolute;left:101.00px;top:451.90px;width:2.00px;height:2.00px;background:#8c8c8c"></div>
<div style="position:absolute;left:101.00px;top:464.60px;width:2.00px;height:2.00px;background:#8c8c8c"></div>
<div style="position:absolute;left:74px;top:468.60px;width:17px;height:16px;border:1px solid #b4b4b4;background:#e6e6e6"><div style="position:absolute;left:4px;top:7px;width:9px;height:2px;background:#6a6a6a"></div></div>
<div style="position:absolute;left:83.00px;top:509.00px;width:1.00px;height:86.80px;background:#8c8c8c"></div>
<div style="position:absolute;left:83.00px;top:509.00px;width:6.00px;height:1.00px;background:#8c8c8c"></div>
<div style="position:absolute;left:101.00px;top:518.50px;width:2.00px;height:2.00px;background:#8c8c8c"></div>
<div style="position:absolute;left:101.00px;top:538.70px;width:2.00px;height:2.00px;background:#8c8c8c"></div>
<div style="position:absolute;left:101.00px;top:558.90px;width:2.00px;height:2.00px;background:#8c8c8c"></div>
<div style="position:absolute;left:101.00px;top:579.10px;width:2.00px;height:2.00px;background:#8c8c8c"></div>
<div style="position:absolute;left:101.00px;top:591.80px;width:2.00px;height:2.00px;background:#8c8c8c"></div>
<div style="position:absolute;left:74px;top:595.80px;width:17px;height:16px;border:1px solid #b4b4b4;background:#e6e6e6"><div style="position:absolute;left:4px;top:7px;width:9px;height:2px;background:#6a6a6a"></div></div>
<div style="position:absolute;left:83.00px;top:636.20px;width:1.00px;height:66.60px;background:#8c8c8c"></div>
<div style="position:absolute;left:83.00px;top:636.20px;width:6.00px;height:1.00px;background:#8c8c8c"></div>
<div style="position:absolute;left:101.00px;top:645.70px;width:2.00px;height:2.00px;background:#8c8c8c"></div>
<div style="position:absolute;left:101.00px;top:665.90px;width:2.00px;height:2.00px;background:#8c8c8c"></div>
<div style="position:absolute;left:101.00px;top:686.10px;width:2.00px;height:2.00px;background:#8c8c8c"></div>
<div style="position:absolute;left:101.00px;top:698.80px;width:2.00px;height:2.00px;background:#8c8c8c"></div>
<div style="position:absolute;left:74px;top:702.80px;width:17px;height:16px;border:1px solid #b4b4b4;background:#e6e6e6"><div style="position:absolute;left:4px;top:7px;width:9px;height:2px;background:#6a6a6a"></div></div>
<div style="position:absolute;left:83.00px;top:743.20px;width:1.00px;height:26.20px;background:#8c8c8c"></div>
<div style="position:absolute;left:83.00px;top:743.20px;width:6.00px;height:1.00px;background:#8c8c8c"></div>
<div style="position:absolute;left:101.00px;top:752.70px;width:2.00px;height:2.00px;background:#8c8c8c"></div>
<div style="position:absolute;left:101.00px;top:765.40px;width:2.00px;height:2.00px;background:#8c8c8c"></div>
<div style="position:absolute;left:74px;top:769.40px;width:17px;height:16px;border:1px solid #b4b4b4;background:#e6e6e6"><div style="position:absolute;left:4px;top:7px;width:9px;height:2px;background:#6a6a6a"></div></div>
<div style="position:absolute;left:83.00px;top:809.80px;width:1.00px;height:147.40px;background:#8c8c8c"></div>
<div style="position:absolute;left:83.00px;top:809.80px;width:6.00px;height:1.00px;background:#8c8c8c"></div>
<div style="position:absolute;left:101.00px;top:819.30px;width:2.00px;height:2.00px;background:#8c8c8c"></div>
<div style="position:absolute;left:101.00px;top:839.50px;width:2.00px;height:2.00px;background:#8c8c8c"></div>
<div style="position:absolute;left:101.00px;top:859.70px;width:2.00px;height:2.00px;background:#8c8c8c"></div>
<div style="position:absolute;left:101.00px;top:879.90px;width:2.00px;height:2.00px;background:#8c8c8c"></div>
<div style="position:absolute;left:101.00px;top:900.10px;width:2.00px;height:2.00px;background:#8c8c8c"></div>
<div style="position:absolute;left:101.00px;top:920.30px;width:2.00px;height:2.00px;background:#8c8c8c"></div>
<div style="position:absolute;left:101.00px;top:940.50px;width:2.00px;height:2.00px;background:#8c8c8c"></div>
<div style="position:absolute;left:101.00px;top:953.20px;width:2.00px;height:2.00px;background:#8c8c8c"></div>
<div style="position:absolute;left:74px;top:957.20px;width:17px;height:16px;border:1px solid #b4b4b4;background:#e6e6e6"><div style="position:absolute;left:4px;top:7px;width:9px;height:2px;background:#6a6a6a"></div></div>
<div style="position:absolute;left:83.00px;top:997.60px;width:1.00px;height:66.60px;background:#8c8c8c"></div>
<div style="position:absolute;left:83.00px;top:997.60px;width:6.00px;height:1.00px;background:#8c8c8c"></div>
<div style="position:absolute;left:101.00px;top:1007.10px;width:2.00px;height:2.00px;background:#8c8c8c"></div>
<div style="position:absolute;left:101.00px;top:1027.30px;width:2.00px;height:2.00px;background:#8c8c8c"></div>
<div style="position:absolute;left:101.00px;top:1047.50px;width:2.00px;height:2.00px;background:#8c8c8c"></div>
<div style="position:absolute;left:101.00px;top:1060.20px;width:2.00px;height:2.00px;background:#8c8c8c"></div>
<div style="position:absolute;left:74px;top:1064.20px;width:17px;height:16px;border:1px solid #b4b4b4;background:#e6e6e6"><div style="position:absolute;left:4px;top:7px;width:9px;height:2px;background:#6a6a6a"></div></div>
<div style="position:absolute;left:219.70px;top:1092.00px;width:422.40px;height:21.00px;background:#e7e7e7"></div>
<div style="position:absolute;left:1201.50px;top:1092.00px;width:92.40px;height:21.00px;background:#e7e7e7"></div>
<div style="position:absolute;left:645.10px;top:1092.00px;width:88.20px;height:21.00px;background:#e7e7e7"></div>
<div style="position:absolute;left:1296.90px;top:1092.00px;width:90.30px;height:21.00px;background:#e7e7e7"></div>
<div style="position:absolute;left:736.30px;top:1092.00px;width:88.20px;height:21.00px;background:#e7e7e7"></div>
<div style="position:absolute;left:1390.20px;top:1092.00px;width:90.40px;height:21.00px;background:#e7e7e7"></div>
<div style="position:absolute;left:827.50px;top:1092.00px;width:88.50px;height:21.00px;background:#e7e7e7"></div>
<div style="position:absolute;left:1483.60px;top:1092.00px;width:90.10px;height:21.00px;background:#e7e7e7"></div>
<div style="position:absolute;left:919.00px;top:1092.00px;width:87.70px;height:21.00px;background:#e7e7e7"></div>
<div style="position:absolute;left:1576.70px;top:1092.00px;width:90.30px;height:21.00px;background:#e7e7e7"></div>
<div style="position:absolute;left:1009.70px;top:1092.00px;width:88.40px;height:21.00px;background:#e7e7e7"></div>
<div style="position:absolute;left:1670.00px;top:1092.00px;width:90.60px;height:21.00px;background:#e7e7e7"></div>
<div style="position:absolute;left:1101.10px;top:1092.00px;width:88.30px;height:21.00px;background:#e7e7e7"></div>
<div style="position:absolute;left:1763.60px;top:1092.00px;width:92.20px;height:21.00px;background:#e7e7e7"></div>
<div class="t" style="left:263.80px;top:1096.20px;font-size:13px;line-height:13px;font-weight:bold;color:#4a4a4a;letter-spacing:2.35px;">TOTAL</div>
<div class="t" style="right:1284.00px;top:1096.20px;font-size:13px;line-height:13px;font-weight:bold;color:#545454;">1,236,282</div>
<div class="t" style="right:1193.00px;top:1096.20px;font-size:13px;line-height:13px;font-weight:bold;color:#545454;">1,128,733</div>
<div class="t" style="right:1102.00px;top:1096.20px;font-size:13px;line-height:13px;font-weight:bold;color:#545454;">1,358,328</div>
<div class="t" style="right:1010.70px;top:1096.20px;font-size:13px;line-height:13px;font-weight:bold;color:#545454;">107,549</div>
<div class="t" style="right:922.80px;top:1096.20px;font-size:13px;line-height:13px;font-weight:bold;color:#545454;">8.70%</div>
<div style="position:absolute;left:948.04px;top:1096.60px;width:0;height:0;border-left:5.40px solid transparent;border-right:5.40px solid transparent;border-bottom:10.60px solid #545454"></div>
<div class="t" style="right:824.00px;top:1096.20px;font-size:13px;line-height:13px;font-weight:bold;color:#545454;">(122,047)</div>
<div class="t" style="right:740.70px;top:1096.20px;font-size:13px;line-height:13px;font-weight:bold;color:#ee0000;">9.87%</div>
<div style="position:absolute;left:1129.94px;top:1095.90px;width:0;height:0;border-left:5.50px solid transparent;border-right:5.50px solid transparent;border-top:11.00px solid #ee0000"></div>
<div class="t" style="right:632.60px;top:1096.20px;font-size:13px;line-height:13px;font-weight:bold;color:#545454;">9,766,668</div>
<div class="t" style="right:539.60px;top:1096.20px;font-size:13px;line-height:13px;font-weight:bold;color:#545454;">8,916,876</div>
<div class="t" style="right:445.80px;top:1096.20px;font-size:13px;line-height:13px;font-weight:bold;color:#545454;">10,730,598</div>
<div class="t" style="right:352.50px;top:1096.20px;font-size:13px;line-height:13px;font-weight:bold;color:#545454;">849,792</div>
<div class="t" style="right:262.50px;top:1096.20px;font-size:13px;line-height:13px;font-weight:bold;color:#545454;">8.70%</div>
<div style="position:absolute;left:1608.34px;top:1096.60px;width:0;height:0;border-left:5.40px solid transparent;border-right:5.40px solid transparent;border-bottom:10.60px solid #545454"></div>
<div class="t" style="right:160.80px;top:1096.20px;font-size:13px;line-height:13px;font-weight:bold;color:#545454;">(963,930)</div>
<div class="t" style="right:75.60px;top:1096.20px;font-size:13px;line-height:13px;font-weight:bold;color:#ee0000;">9.87%</div>
<div style="position:absolute;left:1795.04px;top:1095.90px;width:0;height:0;border-left:5.50px solid transparent;border-right:5.50px solid transparent;border-top:11.00px solid #ee0000"></div>
<!-- tab bar -->
<div style="position:absolute;left:72px;top:1117px;width:1821px;height:29.5px;background:#e6e6e6"></div>
<div style="position:absolute;left:100.5px;top:1128px;width:0;height:0;border-top:4px solid transparent;border-bottom:4px solid transparent;border-right:5px solid #c4c4c4"></div>
<div style="position:absolute;left:133.5px;top:1128px;width:0;height:0;border-top:4px solid transparent;border-bottom:4px solid transparent;border-left:5px solid #c4c4c4"></div>
<div style="position:absolute;left:184px;top:1116px;width:148px;height:27px;border-left:1px solid #b4b4b4;border-right:1px solid #b4b4b4;background:#fff"></div>
<div style="position:absolute;left:184px;top:1140.8px;width:150px;height:2.6px;background:#2f7a3f"></div>
<div class="t" style="left:198.3px;top:1121.5px;font-size:14.2px;line-height:16px;font-weight:bold;color:#2f7a3f">Variance Analysis</div>
<div class="t" style="left:347.8px;top:1121.3px;font-size:14.8px;line-height:16px;color:#555">Info</div>
<div style="position:absolute;left:390.8px;top:1120px;width:1.2px;height:22.5px;background:#a8a8a8"></div>
<div style="position:absolute;left:855px;top:1127.5px;width:2px;height:1.6px;background:#a8a8a8"></div>
<div style="position:absolute;left:855px;top:1132px;width:2px;height:1.6px;background:#a8a8a8"></div>
<div style="position:absolute;left:855px;top:1136.4px;width:2px;height:1.6px;background:#a8a8a8"></div>
<div style="position:absolute;left:872.5px;top:1123px;width:995px;height:17px;background:#d9d9d9"></div>
<div style="position:absolute;left:872.5px;top:1123.3px;width:14.8px;height:14.5px;border:1px solid #9d9d9d;background:#fff"></div>
<div style="position:absolute;left:877.5px;top:1127.5px;width:0;height:0;border-top:4px solid transparent;border-bottom:4px solid transparent;border-right:5px solid #6e6e6e"></div>
<div style="position:absolute;left:888.3px;top:1123.3px;width:497.4px;height:14.5px;border:1px solid #9d9d9d;background:#fff"></div>
<div style="position:absolute;left:1852.1px;top:1123.3px;width:14.5px;height:14.5px;border:1px solid #9d9d9d;background:#fff"></div>
<div style="position:absolute;left:1857.8px;top:1127.5px;width:0;height:0;border-top:4px solid transparent;border-bottom:4px solid transparent;border-left:5px solid #6e6e6e"></div>
<!-- status bar -->
<div style="position:absolute;left:72px;top:1146.5px;width:1821px;height:26.5px;background:#f3f2f1"></div>
<div class="t" style="left:83.3px;top:1151.9px;font-size:11.6px;line-height:14px;color:#444;letter-spacing:-0.15px">Ready</div>
<div style="position:absolute;left:1659.5px;top:1160.3px;width:13.2px;height:1.6px;background:#666"></div>
<div style="position:absolute;left:1679.2px;top:1160.7px;width:134px;height:1px;background:#888"></div>
<div style="position:absolute;left:1735.4px;top:1155.3px;width:4.2px;height:10.7px;background:#555"></div>
<div style="position:absolute;left:1747px;top:1157.5px;width:1px;height:6.5px;background:#777"></div>
<div style="position:absolute;left:1821.2px;top:1160.3px;width:13.5px;height:1.6px;background:#555"></div>
<div style="position:absolute;left:1827.2px;top:1154.7px;width:1.6px;height:12.5px;background:#555"></div>
<div class="t" style="left:1847.8px;top:1153.4px;font-size:11.2px;line-height:14px;color:#444">90%</div>
</body></html>
